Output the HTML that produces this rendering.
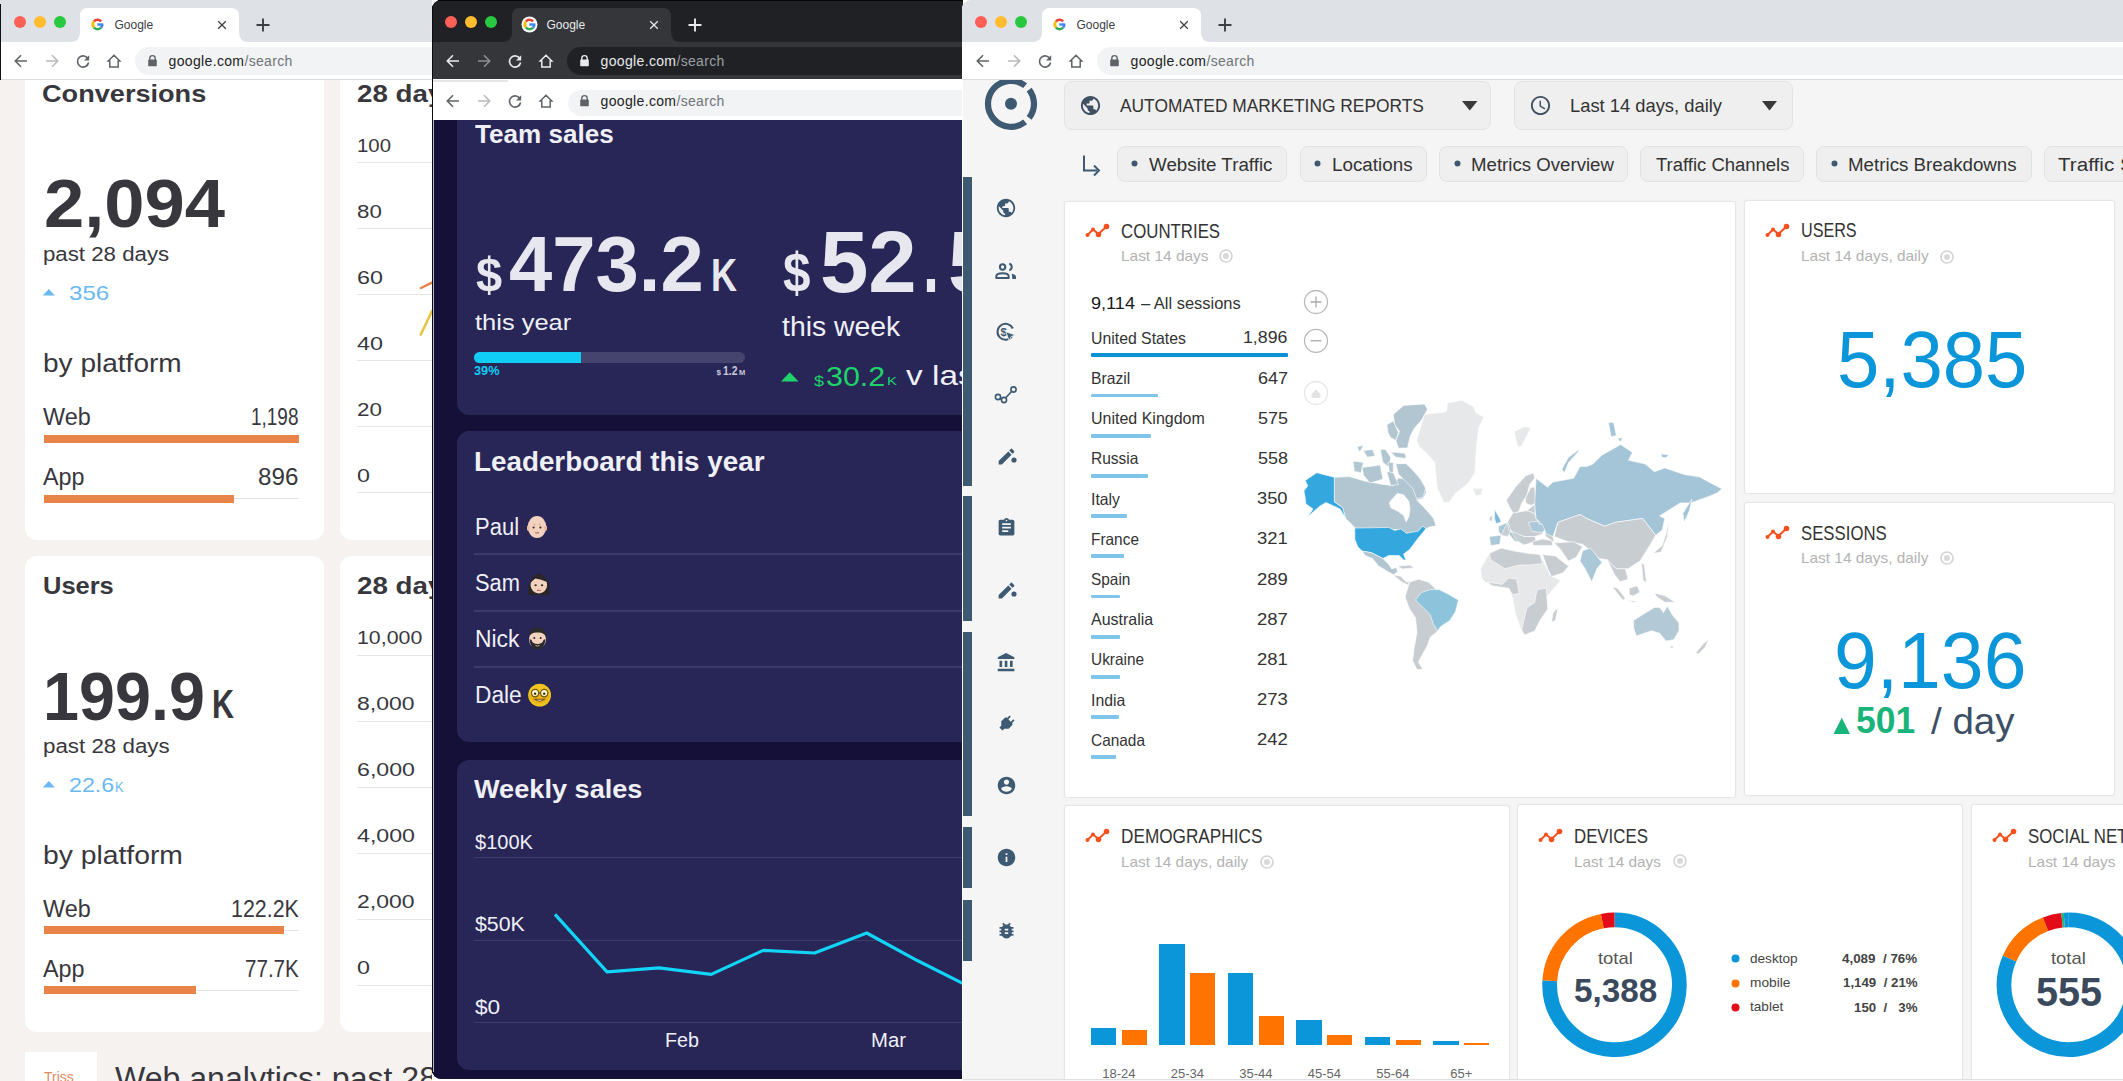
<!DOCTYPE html><html><head><meta charset="utf-8"><style>html,body{margin:0;padding:0;width:2123px;height:1081px;overflow:hidden;background:#fff;font-family:"Liberation Sans",sans-serif;}*{box-sizing:border-box;-webkit-font-smoothing:antialiased;}</style></head><body><div style="position:relative;width:2123px;height:1081px;overflow:hidden;"><div style="position:absolute;left:0;top:0;width:432px;height:1081px;overflow:hidden;background:#f5f2ef;"><div style="position:absolute;left:25.00px;top:40.00px;width:299.00px;height:500.00px;background:#fff;border-radius:12px;"></div><div style="position:absolute;left:340.00px;top:40.00px;width:200.00px;height:500.00px;background:#fff;border-radius:12px;"></div><div style="position:absolute;left:25.00px;top:556.00px;width:299.00px;height:476.00px;background:#fff;border-radius:12px;"></div><div style="position:absolute;left:340.00px;top:556.00px;width:200.00px;height:476.00px;background:#fff;border-radius:12px;"></div><div style="position:absolute;left:0.00px;top:0.00px;width:432.00px;height:42.00px;background:#dee1e6;"></div><div style="position:absolute;left:14.00px;top:15.50px;width:12.00px;height:12.00px;background:#fe5f57;border-radius:50%;"></div><div style="position:absolute;left:34.00px;top:15.50px;width:12.00px;height:12.00px;background:#febc2e;border-radius:50%;"></div><div style="position:absolute;left:54.00px;top:15.50px;width:12.00px;height:12.00px;background:#28c840;border-radius:50%;"></div><svg style="position:absolute;left:70px;top:8px;" width="180" height="34" viewBox="0 0 180 34"><path d="M0 34 Q10 34 10 24 L10 8 Q10 0 18 0 L161 0 Q169 0 169 8 L169 24 Q169 34 179 34 Z" fill="#ffffff"/></svg><svg style="position:absolute;left:89px;top:16px;" width="17" height="17" viewBox="0 0 17 17"><path d="M4.90 5.48 A4.7 4.7 0 0 1 12.10 5.48" stroke="#ea4335" stroke-width="2.6" fill="none"/><path d="M4.90 11.52 A4.7 4.7 0 0 1 4.90 5.48" stroke="#fbbc05" stroke-width="2.6" fill="none"/><path d="M12.10 11.52 A4.7 4.7 0 0 1 4.90 11.52" stroke="#34a853" stroke-width="2.6" fill="none"/><path d="M13.20 8.50 A4.7 4.7 0 0 1 12.10 11.52" stroke="#4285f4" stroke-width="2.6" fill="none"/><rect x="8.30" y="7.30" width="6.00" height="2.4" fill="#4285f4"/></svg><div style="position:absolute;top:18.84px;font-size:12px;line-height:12px;color:#3c4043;font-weight:400;white-space:nowrap;left:114.50px;">Google</div><svg style="position:absolute;left:216px;top:19px;" width="12" height="12" viewBox="0 0 12 12"><path d="M2.2 2.2 L9.8 9.8 M9.8 2.2 L2.2 9.8" stroke="#3c4043" stroke-width="1.3"/></svg><svg style="position:absolute;left:255px;top:17px;" width="16" height="16" viewBox="0 0 16 16"><path d="M8 1.5 V14.5 M1.5 8 H14.5" stroke="#3c4043" stroke-width="1.9"/></svg><div style="position:absolute;left:0.00px;top:42.00px;width:432.00px;height:37.00px;background:#ffffff;"></div><div style="position:absolute;left:0.00px;top:79.00px;width:432.00px;height:1.00px;background:#dadce0;"></div><svg style="position:absolute;left:13px;top:53px;" width="16" height="16" viewBox="0 0 16 16"><path d="M14 8 H2.5 M8 2.3 L2.3 8 L8 13.7" stroke="#5f6368" stroke-width="1.6" fill="none"/></svg><svg style="position:absolute;left:44px;top:53px;" width="16" height="16" viewBox="0 0 16 16"><path d="M2 8 H13.5 M8 2.3 L13.7 8 L8 13.7" stroke="#b9babc" stroke-width="1.6" fill="none"/></svg><svg style="position:absolute;left:75px;top:53px;" width="16" height="16" viewBox="0 0 16 16"><path d="M13.2 6.2 A5.6 5.6 0 1 0 13.6 9.5" stroke="#5f6368" stroke-width="1.6" fill="none"/><path d="M14.2 2.2 V7.4 H9" fill="#5f6368"/></svg><svg style="position:absolute;left:106px;top:53px;" width="16" height="16" viewBox="0 0 16 16"><path d="M8 2.2 L2.2 8 H3.8 V14 H12.2 V8 H13.8 Z" stroke="#5f6368" stroke-width="1.5" fill="none" stroke-linejoin="miter"/></svg><div style="position:absolute;left:135.00px;top:47.00px;width:317.00px;height:27.50px;background:#f1f3f4;border-radius:14px;"></div><svg style="position:absolute;left:147px;top:54px;" width="11" height="13" viewBox="0 0 11 13"><path d="M2.8 6 V4.3 A2.7 2.7 0 0 1 8.2 4.3 V6" stroke="#5f6368" stroke-width="1.4" fill="none"/><rect x="1.2" y="5.6" width="8.6" height="6.6" rx="0.8" fill="#5f6368"/></svg><div style="position:absolute;top:54.05px;font-size:14px;line-height:14px;color:#202124;font-weight:400;white-space:nowrap;letter-spacing:0.35px;left:168.50px;">google.com<span style="color:#6f7378">/search</span></div><div style="position:absolute;left:41.70px;top:81.83px;font-size:24.3px;line-height:24.3px;color:#38373d;font-weight:700;white-space:pre;transform-origin:0 20.57px;transform:scaleX(1.1162);">Conversions</div><div style="position:absolute;left:44.40px;top:168.84px;font-size:68px;line-height:68px;color:#38373d;font-weight:700;white-space:pre;transform-origin:0 57.56px;transform:scaleX(1.0640);">2,094</div><div style="position:absolute;left:42.70px;top:245.49px;font-size:19.5px;line-height:19.5px;color:#38373d;font-weight:400;white-space:pre;transform-origin:0 16.51px;transform:scaleX(1.1410);">past 28 days</div><svg style="position:absolute;left:42px;top:288px;" width="14" height="8" viewBox="0 0 14 8"><path d="M0.7 7.6 L6.8 0.9 L12.9 7.6 Z" fill="#6bb9f0"/></svg><div style="position:absolute;left:68.90px;top:282.22px;font-size:21px;line-height:21px;color:#6bb9f0;font-weight:400;white-space:pre;transform-origin:0 17.78px;transform:scaleX(1.1457);">356</div><div style="position:absolute;left:43.30px;top:350.39px;font-size:26px;line-height:26px;color:#38373d;font-weight:400;white-space:pre;transform-origin:0 22.01px;transform:scaleX(1.0785);">by platform</div><div style="position:absolute;left:43.30px;top:406.23px;font-size:23px;line-height:23px;color:#38373d;font-weight:400;white-space:pre;transform-origin:0 19.47px;transform:scaleX(1.0171);">Web</div><div style="position:absolute;left:250.50px;top:406.23px;font-size:23px;line-height:23px;color:#38373d;font-weight:400;white-space:pre;transform-origin:0 19.47px;transform:scaleX(0.8247);">1,198</div><div style="position:absolute;left:44.00px;top:434.60px;width:255.00px;height:8.00px;background:#e8834a;"></div><div style="position:absolute;left:43.30px;top:465.53px;font-size:23px;line-height:23px;color:#38373d;font-weight:400;white-space:pre;transform-origin:0 19.47px;transform:scaleX(1.0147);">App</div><div style="position:absolute;left:257.60px;top:465.53px;font-size:23px;line-height:23px;color:#38373d;font-weight:400;white-space:pre;transform-origin:0 19.47px;transform:scaleX(1.0521);">896</div><div style="position:absolute;left:44.00px;top:498.00px;width:255.00px;height:1.00px;background:#e3e3e3;"></div><div style="position:absolute;left:44.00px;top:494.60px;width:190.00px;height:8.00px;background:#e8834a;"></div><div style="position:absolute;left:356.70px;top:81.83px;font-size:24.3px;line-height:24.3px;color:#38373d;font-weight:700;white-space:pre;transform-origin:0 20.57px;transform:scaleX(1.1420);">28 days</div><div style="position:absolute;left:357.00px;top:136.74px;font-size:18.5px;line-height:18.5px;color:#38373d;font-weight:400;white-space:pre;transform-origin:0 15.66px;transform:scaleX(1.1003);">100</div><div style="position:absolute;left:357.00px;top:162.40px;width:80.00px;height:1.00px;background:#e6e6e6;"></div><div style="position:absolute;left:357.00px;top:202.74px;font-size:18.5px;line-height:18.5px;color:#38373d;font-weight:400;white-space:pre;transform-origin:0 15.66px;transform:scaleX(1.2039);">80</div><div style="position:absolute;left:357.00px;top:228.40px;width:80.00px;height:1.00px;background:#e6e6e6;"></div><div style="position:absolute;left:357.00px;top:268.74px;font-size:18.5px;line-height:18.5px;color:#38373d;font-weight:400;white-space:pre;transform-origin:0 15.66px;transform:scaleX(1.2621);">60</div><div style="position:absolute;left:357.00px;top:294.40px;width:80.00px;height:1.00px;background:#e6e6e6;"></div><div style="position:absolute;left:357.00px;top:334.74px;font-size:18.5px;line-height:18.5px;color:#38373d;font-weight:400;white-space:pre;transform-origin:0 15.66px;transform:scaleX(1.2621);">40</div><div style="position:absolute;left:357.00px;top:360.40px;width:80.00px;height:1.00px;background:#e6e6e6;"></div><div style="position:absolute;left:357.00px;top:400.74px;font-size:18.5px;line-height:18.5px;color:#38373d;font-weight:400;white-space:pre;transform-origin:0 15.66px;transform:scaleX(1.2136);">20</div><div style="position:absolute;left:357.00px;top:426.40px;width:80.00px;height:1.00px;background:#e6e6e6;"></div><div style="position:absolute;left:357.00px;top:466.74px;font-size:18.5px;line-height:18.5px;color:#38373d;font-weight:400;white-space:pre;transform-origin:0 15.66px;transform:scaleX(1.2621);">0</div><div style="position:absolute;left:357.00px;top:492.40px;width:80.00px;height:1.00px;background:#e6e6e6;"></div><svg style="position:absolute;left:416px;top:276px;" width="20" height="64" viewBox="0 0 20 64"><path d="M5 12 L16 6.5" stroke="#e8834a" stroke-width="2.5" stroke-linecap="round"/><path d="M4.8 58.5 L16 35" stroke="#e8c341" stroke-width="2.5" stroke-linecap="round"/></svg><div style="position:absolute;left:42.50px;top:574.43px;font-size:24.3px;line-height:24.3px;color:#38373d;font-weight:700;white-space:pre;transform-origin:0 20.57px;transform:scaleX(1.0474);">Users</div><div style="position:absolute;left:42.50px;top:661.64px;font-size:68px;line-height:68px;color:#38373d;font-weight:700;white-space:pre;transform-origin:0 57.56px;transform:scaleX(0.9512);">199.9</div><div style="position:absolute;left:212.30px;top:684.49px;font-size:41px;line-height:41px;color:#38373d;font-weight:700;white-space:pre;transform-origin:0 34.71px;transform:scaleX(0.7432);">K</div><div style="position:absolute;left:42.50px;top:737.49px;font-size:19.5px;line-height:19.5px;color:#38373d;font-weight:400;white-space:pre;transform-origin:0 16.51px;transform:scaleX(1.1456);">past 28 days</div><svg style="position:absolute;left:42px;top:780px;" width="14" height="8" viewBox="0 0 14 8"><path d="M0.7 7.6 L6.8 0.9 L12.9 7.6 Z" fill="#6bb9f0"/></svg><div style="position:absolute;left:68.50px;top:774.42px;font-size:21px;line-height:21px;color:#6bb9f0;font-weight:400;white-space:pre;transform-origin:0 17.78px;transform:scaleX(1.1076);">22.6</div><div style="position:absolute;left:114.80px;top:780.35px;font-size:14px;line-height:14px;color:#6bb9f0;font-weight:400;white-space:pre;transform-origin:0 11.85px;transform:scaleX(0.9140);">K</div><div style="position:absolute;left:42.50px;top:841.99px;font-size:26px;line-height:26px;color:#38373d;font-weight:400;white-space:pre;transform-origin:0 22.01px;transform:scaleX(1.0879);">by platform</div><div style="position:absolute;left:43.30px;top:897.53px;font-size:23px;line-height:23px;color:#38373d;font-weight:400;white-space:pre;transform-origin:0 19.47px;transform:scaleX(1.0171);">Web</div><div style="position:absolute;left:230.50px;top:897.53px;font-size:23px;line-height:23px;color:#38373d;font-weight:400;white-space:pre;transform-origin:0 19.47px;transform:scaleX(0.9314);">122.2K</div><div style="position:absolute;left:44.00px;top:930.00px;width:255.00px;height:1.00px;background:#e3e3e3;"></div><div style="position:absolute;left:44.00px;top:926.30px;width:240.00px;height:8.00px;background:#e8834a;"></div><div style="position:absolute;left:43.30px;top:958.23px;font-size:23px;line-height:23px;color:#38373d;font-weight:400;white-space:pre;transform-origin:0 19.47px;transform:scaleX(1.0147);">App</div><div style="position:absolute;left:244.60px;top:958.23px;font-size:23px;line-height:23px;color:#38373d;font-weight:400;white-space:pre;transform-origin:0 19.47px;transform:scaleX(0.8952);">77.7K</div><div style="position:absolute;left:44.00px;top:990.00px;width:255.00px;height:1.00px;background:#e3e3e3;"></div><div style="position:absolute;left:44.00px;top:986.40px;width:152.00px;height:8.00px;background:#e8834a;"></div><div style="position:absolute;left:356.70px;top:574.43px;font-size:24.3px;line-height:24.3px;color:#38373d;font-weight:700;white-space:pre;transform-origin:0 20.57px;transform:scaleX(1.1420);">28 days</div><div style="position:absolute;left:357.00px;top:629.04px;font-size:18.5px;line-height:18.5px;color:#38373d;font-weight:400;white-space:pre;transform-origin:0 15.66px;transform:scaleX(1.1537);">10,000</div><div style="position:absolute;left:357.00px;top:654.70px;width:80.00px;height:1.00px;background:#e6e6e6;"></div><div style="position:absolute;left:357.00px;top:695.04px;font-size:18.5px;line-height:18.5px;color:#38373d;font-weight:400;white-space:pre;transform-origin:0 15.66px;transform:scaleX(1.2419);">8,000</div><div style="position:absolute;left:357.00px;top:720.70px;width:80.00px;height:1.00px;background:#e6e6e6;"></div><div style="position:absolute;left:357.00px;top:761.04px;font-size:18.5px;line-height:18.5px;color:#38373d;font-weight:400;white-space:pre;transform-origin:0 15.66px;transform:scaleX(1.2527);">6,000</div><div style="position:absolute;left:357.00px;top:786.70px;width:80.00px;height:1.00px;background:#e6e6e6;"></div><div style="position:absolute;left:357.00px;top:827.04px;font-size:18.5px;line-height:18.5px;color:#38373d;font-weight:400;white-space:pre;transform-origin:0 15.66px;transform:scaleX(1.2527);">4,000</div><div style="position:absolute;left:357.00px;top:852.70px;width:80.00px;height:1.00px;background:#e6e6e6;"></div><div style="position:absolute;left:357.00px;top:893.04px;font-size:18.5px;line-height:18.5px;color:#38373d;font-weight:400;white-space:pre;transform-origin:0 15.66px;transform:scaleX(1.2419);">2,000</div><div style="position:absolute;left:357.00px;top:918.70px;width:80.00px;height:1.00px;background:#e6e6e6;"></div><div style="position:absolute;left:357.00px;top:959.04px;font-size:18.5px;line-height:18.5px;color:#38373d;font-weight:400;white-space:pre;transform-origin:0 15.66px;transform:scaleX(1.2621);">0</div><div style="position:absolute;left:357.00px;top:984.70px;width:80.00px;height:1.00px;background:#e6e6e6;"></div><div style="position:absolute;left:25.00px;top:1052.00px;width:72.00px;height:40.00px;background:#fff;"></div><div style="position:absolute;top:1070.15px;font-size:14px;line-height:14px;color:#e08a60;font-weight:400;white-space:nowrap;left:44.00px;font-family:"Liberation Serif",serif;">Triss</div><div style="position:absolute;left:115.00px;top:1062.76px;font-size:31px;line-height:31px;color:#38373d;font-weight:400;white-space:pre;transform-origin:0 26.24px;transform:scaleX(1.0344);">Web analytics: past 28</div></div><div style="position:absolute;left:0.00px;top:4.00px;width:1.00px;height:76.00px;background:#111;"></div><div style="position:absolute;left:432px;top:0;width:531px;height:1079px;overflow:hidden;background:#141037;border-radius:9px 0 0 9px;"><div style="position:absolute;left:0.00px;top:0.00px;width:531.00px;height:42.00px;background:#202124;"></div><div style="position:absolute;left:13.00px;top:15.50px;width:12.00px;height:12.00px;background:#fe5f57;border-radius:50%;"></div><div style="position:absolute;left:33.00px;top:15.50px;width:12.00px;height:12.00px;background:#febc2e;border-radius:50%;"></div><div style="position:absolute;left:53.00px;top:15.50px;width:12.00px;height:12.00px;background:#28c840;border-radius:50%;"></div><svg style="position:absolute;left:70px;top:8px;" width="180" height="34" viewBox="0 0 180 34"><path d="M0 34 Q10 34 10 24 L10 8 Q10 0 18 0 L161 0 Q169 0 169 8 L169 24 Q169 34 179 34 Z" fill="#35363a"/></svg><svg style="position:absolute;left:89px;top:16px;" width="17" height="17" viewBox="0 0 17 17"><circle cx="8.5" cy="8.5" r="8" fill="#fff"/><path d="M4.90 5.48 A4.7 4.7 0 0 1 12.10 5.48" stroke="#ea4335" stroke-width="2.6" fill="none"/><path d="M4.90 11.52 A4.7 4.7 0 0 1 4.90 5.48" stroke="#fbbc05" stroke-width="2.6" fill="none"/><path d="M12.10 11.52 A4.7 4.7 0 0 1 4.90 11.52" stroke="#34a853" stroke-width="2.6" fill="none"/><path d="M13.20 8.50 A4.7 4.7 0 0 1 12.10 11.52" stroke="#4285f4" stroke-width="2.6" fill="none"/><rect x="8.30" y="7.30" width="6.00" height="2.4" fill="#4285f4"/></svg><div style="position:absolute;top:18.84px;font-size:12px;line-height:12px;color:#e8eaed;font-weight:400;white-space:nowrap;left:114.50px;">Google</div><svg style="position:absolute;left:216px;top:19px;" width="12" height="12" viewBox="0 0 12 12"><path d="M2.2 2.2 L9.8 9.8 M9.8 2.2 L2.2 9.8" stroke="#e8eaed" stroke-width="1.3"/></svg><svg style="position:absolute;left:255px;top:17px;" width="16" height="16" viewBox="0 0 16 16"><path d="M8 1.5 V14.5 M1.5 8 H14.5" stroke="#e8eaed" stroke-width="1.9"/></svg><div style="position:absolute;left:0.00px;top:42.00px;width:531.00px;height:37.00px;background:#35363a;"></div><div style="position:absolute;left:0.00px;top:79.00px;width:531.00px;height:1.00px;background:#3a3b3e;"></div><svg style="position:absolute;left:13px;top:53px;" width="16" height="16" viewBox="0 0 16 16"><path d="M14 8 H2.5 M8 2.3 L2.3 8 L8 13.7" stroke="#e8eaed" stroke-width="1.6" fill="none"/></svg><svg style="position:absolute;left:44px;top:53px;" width="16" height="16" viewBox="0 0 16 16"><path d="M2 8 H13.5 M8 2.3 L13.7 8 L8 13.7" stroke="#8d8e91" stroke-width="1.6" fill="none"/></svg><svg style="position:absolute;left:75px;top:53px;" width="16" height="16" viewBox="0 0 16 16"><path d="M13.2 6.2 A5.6 5.6 0 1 0 13.6 9.5" stroke="#e8eaed" stroke-width="1.6" fill="none"/><path d="M14.2 2.2 V7.4 H9" fill="#e8eaed"/></svg><svg style="position:absolute;left:106px;top:53px;" width="16" height="16" viewBox="0 0 16 16"><path d="M8 2.2 L2.2 8 H3.8 V14 H12.2 V8 H13.8 Z" stroke="#e8eaed" stroke-width="1.5" fill="none" stroke-linejoin="miter"/></svg><div style="position:absolute;left:135.00px;top:47.00px;width:416.00px;height:27.50px;background:#202124;border-radius:14px;"></div><svg style="position:absolute;left:147px;top:54px;" width="11" height="13" viewBox="0 0 11 13"><path d="M2.8 6 V4.3 A2.7 2.7 0 0 1 8.2 4.3 V6" stroke="#e8eaed" stroke-width="1.4" fill="none"/><rect x="1.2" y="5.6" width="8.6" height="6.6" rx="0.8" fill="#e8eaed"/></svg><div style="position:absolute;top:54.05px;font-size:14px;line-height:14px;color:#e8eaed;font-weight:400;white-space:nowrap;letter-spacing:0.35px;left:168.50px;">google.com<span style="color:#9aa0a6">/search</span></div><div style="position:absolute;left:0.00px;top:79.00px;width:531.00px;height:41.00px;background:#ffffff;"></div><div style="position:absolute;left:0.00px;top:80.00px;width:76.00px;height:1.50px;background:#e6e6e6;"></div><svg style="position:absolute;left:13px;top:93px;" width="16" height="16" viewBox="0 0 16 16"><path d="M14 8 H2.5 M8 2.3 L2.3 8 L8 13.7" stroke="#5f6368" stroke-width="1.6" fill="none"/></svg><svg style="position:absolute;left:44px;top:93px;" width="16" height="16" viewBox="0 0 16 16"><path d="M2 8 H13.5 M8 2.3 L13.7 8 L8 13.7" stroke="#b9babc" stroke-width="1.6" fill="none"/></svg><svg style="position:absolute;left:75px;top:93px;" width="16" height="16" viewBox="0 0 16 16"><path d="M13.2 6.2 A5.6 5.6 0 1 0 13.6 9.5" stroke="#5f6368" stroke-width="1.6" fill="none"/><path d="M14.2 2.2 V7.4 H9" fill="#5f6368"/></svg><svg style="position:absolute;left:106px;top:93px;" width="16" height="16" viewBox="0 0 16 16"><path d="M8 2.2 L2.2 8 H3.8 V14 H12.2 V8 H13.8 Z" stroke="#5f6368" stroke-width="1.5" fill="none"/></svg><div style="position:absolute;left:135.50px;top:90.00px;width:531.00px;height:26.00px;background:#f1f3f4;border-radius:13px;"></div><svg style="position:absolute;left:147px;top:94px;" width="11" height="13" viewBox="0 0 11 13"><path d="M2.8 6 V4.3 A2.7 2.7 0 0 1 8.2 4.3 V6" stroke="#5f6368" stroke-width="1.4" fill="none"/><rect x="1.2" y="5.6" width="8.6" height="6.6" rx="0.8" fill="#5f6368"/></svg><div style="position:absolute;top:93.65px;font-size:14px;line-height:14px;color:#202124;font-weight:400;white-space:nowrap;letter-spacing:0.35px;left:168.50px;">google.com<span style="color:#6f7378">/search</span></div><div style="position:absolute;left:0;top:120px;width:531px;height:959px;overflow:hidden;background:#141037;"><div style="position:absolute;left:-432px;top:-120px;width:2123px;height:1081px;"><div style="position:absolute;left:457.00px;top:60.00px;width:600.00px;height:355.00px;background:#272656;border-radius:12px;"></div><div style="position:absolute;left:475.30px;top:120.70px;font-size:26.7px;line-height:26.7px;color:#efeff6;font-weight:700;white-space:pre;transform-origin:0 22.60px;transform:scaleX(0.9768);">Team sales</div><div style="position:absolute;left:475.80px;top:249.92px;font-size:49px;line-height:49px;color:#e7e7ef;font-weight:700;white-space:pre;transform-origin:0 41.48px;transform:scaleX(0.9597);">$</div><div style="position:absolute;left:508.90px;top:225.80px;font-size:77.5px;line-height:77.5px;color:#e7e7ef;font-weight:700;white-space:pre;transform-origin:0 65.60px;transform:scaleX(1.0041);">473.2</div><div style="position:absolute;left:711.20px;top:252.46px;font-size:46px;line-height:46px;color:#e7e7ef;font-weight:700;white-space:pre;transform-origin:0 38.94px;transform:scaleX(0.7831);">K</div><div style="position:absolute;left:475.30px;top:311.68px;font-size:22px;line-height:22px;color:#efeff6;font-weight:400;white-space:pre;transform-origin:0 18.62px;transform:scaleX(1.1576);">this year</div><div style="position:absolute;left:474.30px;top:351.70px;width:270.50px;height:11.50px;background:#45446f;border-radius:6px;"></div><div style="position:absolute;left:474.30px;top:351.70px;width:106.40px;height:11.50px;background:#10cdf6;border-radius:6px 0 0 6px;"></div><div style="position:absolute;left:474.30px;top:364.73px;font-size:12.6px;line-height:12.6px;color:#10cdf6;font-weight:700;white-space:pre;transform-origin:0 10.67px;transform:scaleX(1.0119);">39%</div><div style="position:absolute;left:716.60px;top:368.63px;font-size:8px;line-height:8px;color:#c9c9d8;font-weight:700;white-space:pre;transform-origin:0 6.77px;transform:scaleX(1.0000);">$</div><div style="position:absolute;left:722.50px;top:365.24px;font-size:12px;line-height:12px;color:#c9c9d8;font-weight:700;white-space:pre;transform-origin:0 10.16px;transform:scaleX(0.8683);">1.2</div><div style="position:absolute;left:738.50px;top:368.63px;font-size:8px;line-height:8px;color:#c9c9d8;font-weight:700;white-space:pre;transform-origin:0 6.77px;transform:scaleX(0.9403);">M</div><div style="position:absolute;left:782.50px;top:246.44px;font-size:55px;line-height:55px;color:#e7e7ef;font-weight:700;white-space:pre;transform-origin:0 46.56px;transform:scaleX(0.8987);">$</div><div style="position:absolute;left:820.00px;top:218.93px;font-size:87.5px;line-height:87.5px;color:#e7e7ef;font-weight:700;white-space:pre;transform-origin:0 74.07px;transform:scaleX(0.9938);">52</div><div style="position:absolute;left:923.00px;top:218.93px;font-size:87.5px;line-height:87.5px;color:#e7e7ef;font-weight:700;white-space:pre;transform-origin:0 74.07px;transform:scaleX(0.6584);">.</div><div style="position:absolute;left:947.50px;top:218.93px;font-size:87.5px;line-height:87.5px;color:#e7e7ef;font-weight:700;white-space:pre;transform-origin:0 74.07px;transform:scaleX(0.9856);">5</div><div style="position:absolute;left:781.70px;top:313.42px;font-size:27.5px;line-height:27.5px;color:#efeff6;font-weight:400;white-space:pre;transform-origin:0 23.28px;transform:scaleX(1.0314);">this week</div><svg style="position:absolute;left:780.8px;top:371.7px;" width="18" height="10" viewBox="0 0 18 10"><path d="M0 9.5 L8.75 0.3 L17.5 9.5 Z" fill="#1fd36a"/></svg><div style="position:absolute;left:813.70px;top:373.95px;font-size:14px;line-height:14px;color:#1fd36a;font-weight:400;white-space:pre;transform-origin:0 11.85px;transform:scaleX(1.2821);">$</div><div style="position:absolute;left:825.80px;top:362.52px;font-size:27.5px;line-height:27.5px;color:#1fd36a;font-weight:400;white-space:pre;transform-origin:0 23.28px;transform:scaleX(1.1065);">30.2</div><div style="position:absolute;left:886.70px;top:376.07px;font-size:11.5px;line-height:11.5px;color:#1fd36a;font-weight:400;white-space:pre;transform-origin:0 9.73px;transform:scaleX(1.2987);">K</div><div style="position:absolute;left:905.80px;top:362.10px;font-size:28px;line-height:28px;color:#efeff6;font-weight:400;white-space:pre;transform-origin:0 23.70px;transform:scaleX(1.1927);">v last</div><div style="position:absolute;left:457.00px;top:431.00px;width:600.00px;height:311.00px;background:#272656;border-radius:12px;"></div><div style="position:absolute;left:474.20px;top:448.74px;font-size:27px;line-height:27px;color:#efeff6;font-weight:700;white-space:pre;transform-origin:0 22.86px;transform:scaleX(1.0298);">Leaderboard this year</div><div style="position:absolute;left:475.00px;top:516.43px;font-size:23px;line-height:23px;color:#efeff6;font-weight:400;white-space:pre;transform-origin:0 19.47px;transform:scaleX(0.9565);">Paul</div><svg style="position:absolute;left:526.80px;top:515.00px" width="20" height="24" viewBox="0 0 20 24" preserveAspectRatio="none"><ellipse cx="10" cy="12" rx="9.3" ry="11" fill="#f3d2bf"/><ellipse cx="1.2" cy="13" rx="1.6" ry="2.6" fill="#e9b89f"/><ellipse cx="18.8" cy="13" rx="1.6" ry="2.6" fill="#e9b89f"/><circle cx="6.6" cy="12.5" r="1.1" fill="#3b2a22"/><circle cx="13.4" cy="12.5" r="1.1" fill="#3b2a22"/><path d="M6.5 9.6 H8.5 M11.5 9.6 H13.5" stroke="#c99a82" stroke-width="0.9"/><path d="M8.2 17.5 Q10 18.6 11.8 17.5" stroke="#b06a5a" stroke-width="1.1" fill="none"/></svg><div style="position:absolute;left:475.00px;top:572.13px;font-size:23px;line-height:23px;color:#efeff6;font-weight:400;white-space:pre;transform-origin:0 19.47px;transform:scaleX(0.9514);">Sam</div><svg style="position:absolute;left:527.00px;top:570.80px" width="23.7" height="24" viewBox="0 0 20 24" preserveAspectRatio="none"><path d="M1 24 Q-0.5 8 10 2 Q20.5 8 19 24 Z" fill="#2a2628"/><ellipse cx="10" cy="14" rx="7" ry="8.5" fill="#f3d2bf"/><path d="M3 12 Q4 4 10 3.5 Q15.5 4 17 11 Q12 8 7 7.5 Q5 9 3 12 Z" fill="#2a2628"/><circle cx="7.3" cy="14.2" r="1" fill="#3b2a22"/><circle cx="12.7" cy="14.2" r="1" fill="#3b2a22"/><path d="M8.5 19 Q10 20 11.5 19" stroke="#c2665a" stroke-width="1.2" fill="none"/></svg><div style="position:absolute;left:475.00px;top:628.33px;font-size:23px;line-height:23px;color:#efeff6;font-weight:400;white-space:pre;transform-origin:0 19.47px;transform:scaleX(0.9955);">Nick</div><svg style="position:absolute;left:527.00px;top:626.00px" width="21" height="24" viewBox="0 0 21 24" preserveAspectRatio="none"><ellipse cx="10.5" cy="13" rx="8.5" ry="10" fill="#f3d2bf"/><path d="M2 11 Q1.5 2 10.5 1.5 Q19.5 2 19 11 Q17 6 10.5 6.5 Q4 6 2 11 Z" fill="#2b2a2b"/><path d="M2.6 13 Q3 23 10.5 23.5 Q18 23 18.4 13 L16.5 14 Q15.5 18 10.5 18 Q5.5 18 4.5 14 Z" fill="#2b2a2b"/><circle cx="7.3" cy="12" r="1" fill="#2b2a2b"/><circle cx="13.7" cy="12" r="1" fill="#2b2a2b"/><path d="M8.5 19.5 Q10.5 20.5 12.5 19.5" stroke="#d9a58d" stroke-width="1" fill="none"/></svg><div style="position:absolute;left:475.00px;top:683.53px;font-size:23px;line-height:23px;color:#efeff6;font-weight:400;white-space:pre;transform-origin:0 19.47px;transform:scaleX(0.9873);">Dale</div><svg style="position:absolute;left:527.90px;top:682.50px" width="23.3" height="24.3" viewBox="0 0 23 24" preserveAspectRatio="none"><circle cx="11.5" cy="12" r="11.3" fill="#f2c41f"/><path d="M0.5 12 A11.3 11.3 0 0 0 22.5 12" fill="#e0a80e" opacity="0.5"/><circle cx="7" cy="10" r="3.6" fill="#fff6d0" stroke="#6b5a10" stroke-width="1.2"/><circle cx="16" cy="10" r="3.6" fill="#fff6d0" stroke="#6b5a10" stroke-width="1.2"/><path d="M10.6 10 H12.4" stroke="#6b5a10" stroke-width="1.2"/><circle cx="7" cy="10.5" r="1.2" fill="#3a2a10"/><circle cx="16" cy="10.5" r="1.2" fill="#3a2a10"/><path d="M6.5 16 Q11.5 20 16.5 16 Z" fill="#fff" stroke="#7a4a10" stroke-width="1"/></svg><div style="position:absolute;left:474.00px;top:553.30px;width:600.00px;height:1.50px;background:#3b3a6c;"></div><div style="position:absolute;left:474.00px;top:610.30px;width:600.00px;height:1.50px;background:#3b3a6c;"></div><div style="position:absolute;left:474.00px;top:666.00px;width:600.00px;height:1.50px;background:#3b3a6c;"></div><div style="position:absolute;left:457.00px;top:759.60px;width:600.00px;height:310.80px;background:#272656;border-radius:12px;"></div><div style="position:absolute;left:474.30px;top:776.17px;font-size:26.5px;line-height:26.5px;color:#efeff6;font-weight:700;white-space:pre;transform-origin:0 22.43px;transform:scaleX(1.0237);">Weekly sales</div><div style="position:absolute;left:474.90px;top:831.75px;font-size:20.5px;line-height:20.5px;color:#efeff6;font-weight:400;white-space:pre;transform-origin:0 17.35px;transform:scaleX(0.9764);">$100K</div><div style="position:absolute;left:474.00px;top:856.80px;width:600.00px;height:1.20px;background:#3d3c6d;"></div><div style="position:absolute;left:474.90px;top:914.35px;font-size:20.5px;line-height:20.5px;color:#efeff6;font-weight:400;white-space:pre;transform-origin:0 17.35px;transform:scaleX(1.0397);">$50K</div><div style="position:absolute;left:474.00px;top:939.70px;width:600.00px;height:1.20px;background:#3d3c6d;"></div><div style="position:absolute;left:474.90px;top:997.45px;font-size:20.5px;line-height:20.5px;color:#efeff6;font-weight:400;white-space:pre;transform-origin:0 17.35px;transform:scaleX(1.1053);">$0</div><div style="position:absolute;left:474.00px;top:1022.20px;width:600.00px;height:1.20px;background:#3d3c6d;"></div><div style="position:absolute;left:665.00px;top:1030.15px;font-size:20.5px;line-height:20.5px;color:#efeff6;font-weight:400;white-space:pre;transform-origin:0 17.35px;transform:scaleX(0.9632);">Feb</div><div style="position:absolute;left:871.00px;top:1030.15px;font-size:20.5px;line-height:20.5px;color:#efeff6;font-weight:400;white-space:pre;transform-origin:0 17.35px;transform:scaleX(0.9915);">Mar</div><svg style="position:absolute;left:0;top:0" width="2123" height="1081"><polyline points="555.0,914.4 607.0,971.9 659.0,967.8 711.2,974.4 763.2,950.4 814.6,953.0 866.7,933.0 917.8,960.8 970.0,987.0" fill="none" stroke="#12d4f7" stroke-width="3.2" stroke-linejoin="round"/></svg></div></div></div><div style="position:absolute;left:432.00px;top:6.00px;width:1.30px;height:1067.00px;background:#0c0c0c;"></div><div style="position:absolute;left:438.00px;top:0.00px;width:525.00px;height:1.20px;background:#050505;"></div><div style="position:absolute;left:433.40px;top:120.00px;width:1.00px;height:952.00px;background:#b4b3d0;"></div><div style="position:absolute;left:962px;top:0;width:1161px;height:1081px;overflow:hidden;background:#f5f5f5;border-top-left-radius:9px;"><div style="position:absolute;left:-962px;top:0;width:2123px;height:1081px;"><div style="position:absolute;left:963.00px;top:176.70px;width:8.50px;height:309.30px;background:#3e5a72;"></div><div style="position:absolute;left:963.00px;top:496.00px;width:8.50px;height:124.50px;background:#3e5a72;"></div><div style="position:absolute;left:963.00px;top:632.00px;width:8.50px;height:184.00px;background:#3e5a72;"></div><div style="position:absolute;left:963.00px;top:827.00px;width:8.50px;height:61.00px;background:#3e5a72;"></div><div style="position:absolute;left:963.00px;top:900.00px;width:8.50px;height:61.00px;background:#3e5a72;"></div><svg style="position:absolute;left:0;top:0" width="2123" height="200"><path d="M1025.16 121.92 A23 23 0 1 1 1025.16 85.68" stroke="#3e5a72" stroke-width="6.2" fill="none"/><path d="M1029.12 89.64 A23 23 0 0 1 1029.12 117.96" stroke="#3e5a72" stroke-width="6.2" fill="none"/><circle cx="1011" cy="103.8" r="6" fill="#3e5a72"/></svg><svg style="position:absolute;left:995.00px;top:197.00px" width="22" height="22" viewBox="0 0 24 24"><path  d="M12 2C6.48 2 2 6.48 2 12s4.48 10 10 10 10-4.48 10-10S17.52 2 12 2zm-1 17.93c-3.95-.49-7-3.85-7-7.93 0-.62.08-1.21.21-1.79L9 15v1c0 1.1.9 2 2 2v1.93zm6.9-2.54c-.26-.81-1-1.39-1.9-1.39h-1v-3c0-.55-.45-1-1-1H8v-2h2c.55 0 1-.45 1-1V7h2c1.1 0 2-.9 2-2v-.41c2.93 1.19 5 4.06 5 7.41 0 2.08-.8 3.97-2.1 5.39z" fill="#3e5a72"/></svg><svg style="position:absolute;left:995.50px;top:445.50px" width="21" height="21" viewBox="0 0 24 24"><path  d="M3 17.25V21h3.75L17.81 9.94l-3.75-3.75L3 17.25zM20.71 7.04c.39-.39.39-1.02 0-1.41l-2.34-2.34c-.39-.39-1.02-.39-1.41 0l-1.83 1.83 3.75 3.75 1.83-1.83z" fill="#3e5a72"/></svg><svg style="position:absolute;left:995.50px;top:516.50px" width="21" height="21" viewBox="0 0 24 24"><path  d="M19 3h-4.18C14.4 1.84 13.3 1 12 1c-1.3 0-2.4.84-2.82 2H5c-1.1 0-2 .9-2 2v14c0 1.1.9 2 2 2h14c1.1 0 2-.9 2-2V5c0-1.1-.9-2-2-2zm-7 0c.55 0 1 .45 1 1s-.45 1-1 1-1-.45-1-1 .45-1 1-1zm2 14H7v-2h7v2zm3-4H7v-2h10v2zm0-4H7V7h10v2z" fill="#3e5a72"/></svg><svg style="position:absolute;left:995.50px;top:579.50px" width="21" height="21" viewBox="0 0 24 24"><path  d="M3 17.25V21h3.75L17.81 9.94l-3.75-3.75L3 17.25zM20.71 7.04c.39-.39.39-1.02 0-1.41l-2.34-2.34c-.39-.39-1.02-.39-1.41 0l-1.83 1.83 3.75 3.75 1.83-1.83z" fill="#3e5a72"/></svg><svg style="position:absolute;left:995.50px;top:652.00px" width="21" height="21" viewBox="0 0 24 24"><path  d="M4 10v7h3v-7H4zm6 0v7h3v-7h-3zM2 22h19v-3H2v3zm14-12v7h3v-7h-3zm-4.5-9L2 6v2h19V6l-9.5-5z" fill="#3e5a72"/></svg><svg style="position:absolute;left:995.50px;top:712.50px" width="21" height="21" viewBox="0 0 24 24"><path transform="rotate(45 12 12)" d="M16.01 7L16 3h-2v4h-4V3H8v4h-.01C7 6.99 6 7.99 6 8.99v5.49L9.5 18v3h5v-3l3.5-3.51v-5.5c0-1-1-2-1.99-1.99z" fill="#3e5a72"/></svg><svg style="position:absolute;left:995.50px;top:775.00px" width="21" height="21" viewBox="0 0 24 24"><path  d="M12 2C6.48 2 2 6.48 2 12s4.48 10 10 10 10-4.48 10-10S17.52 2 12 2zm0 3c1.66 0 3 1.34 3 3s-1.34 3-3 3-3-1.34-3-3 1.34-3 3-3zm0 14.2c-2.5 0-4.71-1.28-6-3.22.03-1.99 4-3.08 6-3.08 1.99 0 5.97 1.09 6 3.08-1.29 1.94-3.5 3.22-6 3.22z" fill="#3e5a72"/></svg><svg style="position:absolute;left:995.50px;top:847.00px" width="21" height="21" viewBox="0 0 24 24"><path  d="M12 2C6.48 2 2 6.48 2 12s4.48 10 10 10 10-4.48 10-10S17.52 2 12 2zm1 15h-2v-6h2v6zm0-8h-2V7h2v2z" fill="#3e5a72"/></svg><svg style="position:absolute;left:995.50px;top:919.50px" width="21" height="21" viewBox="0 0 24 24"><path  d="M20 8h-2.81c-.45-.78-1.07-1.45-1.82-1.96L17 4.41 15.59 3l-2.17 2.17C12.96 5.06 12.49 5 12 5c-.49 0-.96.06-1.41.17L8.41 3 7 4.41l1.62 1.63C7.88 6.55 7.26 7.22 6.81 8H4v2h2.09c-.05.33-.09.66-.09 1v1H4v2h2v1c0 .34.04.67.09 1H4v2h2.81c1.04 1.79 2.97 3 5.19 3s4.15-1.21 5.19-3H20v-2h-2.09c.05-.33.09-.66.09-1v-1h2v-2h-2v-1c0-.34-.04-.67-.09-1H20V8zm-6 8h-4v-2h4v2zm0-4h-4v-2h4v2z" fill="#3e5a72"/></svg><svg style="position:absolute;left:1011px;top:457px;" width="6" height="6" viewBox="0 0 6 6"><circle cx="3" cy="3" r="2.6" fill="#3e5a72"/></svg><svg style="position:absolute;left:1011px;top:591px;" width="6" height="6" viewBox="0 0 6 6"><circle cx="3" cy="3" r="2.6" fill="#3e5a72"/></svg><svg style="position:absolute;left:0;top:0" width="2123" height="1081"><circle cx="1002.6" cy="267" r="2.7" fill="none" stroke="#3e5a72" stroke-width="2"/><path d="M996.3 278 V276.5 Q996.3 273.3 1002.5 273.3 Q1008.7 273.3 1008.7 276.5 V278 Z" fill="none" stroke="#3e5a72" stroke-width="2" stroke-linejoin="round"/><path d="M1009.3 263.8 A3.4 3.4 0 0 1 1009.3 270.3" fill="none" stroke="#3e5a72" stroke-width="2"/><path d="M1011.8 273.8 Q1016 274.5 1016 277 V279 H1012.3 Z" fill="#3e5a72"/></svg><svg style="position:absolute;left:0;top:0" width="2123" height="1081"><path d="M1012 336.5 A8 8 0 1 1 1012.8 328.5" fill="none" stroke="#3e5a72" stroke-width="2"/><text x="1003.8" y="336.2" font-size="11.5" font-weight="700" text-anchor="middle" fill="#3e5a72" font-family="Liberation Sans">$</text><path d="M1005.8 331.8 L1015.5 335 L1011.2 336.5 L1009.2 340.8 Z" fill="#3e5a72" stroke="#f5f5f5" stroke-width="0.8"/></svg><svg style="position:absolute;left:994px;top:384px;" width="24" height="20" viewBox="0 0 24 20"><path d="M4 14 L9.5 16 L19 6" stroke="#3e5a72" stroke-width="1.6" fill="none"/><circle cx="4" cy="13" r="2.6" fill="#f4f4f4" stroke="#3e5a72" stroke-width="1.6"/><circle cx="10" cy="16" r="2.6" fill="#f4f4f4" stroke="#3e5a72" stroke-width="1.6"/><circle cx="19.5" cy="5.5" r="2.6" fill="#f4f4f4" stroke="#3e5a72" stroke-width="1.6"/></svg><div style="position:absolute;left:1063.50px;top:80.60px;width:427.50px;height:49.20px;background:#efefef;border:1px solid #e3e3e3;border-radius:8px;"></div><svg style="position:absolute;left:1078.50px;top:93.50px" width="23" height="23" viewBox="0 0 24 24"><path  d="M12 2C6.48 2 2 6.48 2 12s4.48 10 10 10 10-4.48 10-10S17.52 2 12 2zm-1 17.93c-3.95-.49-7-3.85-7-7.93 0-.62.08-1.21.21-1.79L9 15v1c0 1.1.9 2 2 2v1.93zm6.9-2.54c-.26-.81-1-1.39-1.9-1.39h-1v-3c0-.55-.45-1-1-1H8v-2h2c.55 0 1-.45 1-1V7h2c1.1 0 2-.9 2-2v-.41c2.93 1.19 5 4.06 5 7.41 0 2.08-.8 3.97-2.1 5.39z" fill="#3e5061"/></svg><div style="position:absolute;left:1119.70px;top:95.92px;font-size:19px;line-height:19px;color:#333;font-weight:400;white-space:pre;transform-origin:0 16.08px;transform:scaleX(0.9140);">AUTOMATED MARKETING REPORTS</div><svg style="position:absolute;left:1461px;top:100px;" width="18" height="12" viewBox="0 0 18 12"><path d="M1 1 L16.5 1 L8.75 10.5 Z" fill="#3a3a3a"/></svg><div style="position:absolute;left:1513.80px;top:80.50px;width:279.60px;height:49.30px;background:#efefef;border:1px solid #e3e3e3;border-radius:8px;"></div><svg style="position:absolute;left:1528.70px;top:94.00px" width="23" height="23" viewBox="0 0 24 24"><path  d="M11.99 2C6.47 2 2 6.48 2 12s4.47 10 9.99 10C17.52 22 22 17.52 22 12S17.52 2 11.99 2zM12 20c-4.42 0-8-3.58-8-8s3.58-8 8-8 8 3.58 8 8-3.58 8-8 8zm.5-13H11v6l5.25 3.15.75-1.23-4.5-2.67z" fill="#3e5061"/></svg><div style="position:absolute;left:1569.50px;top:96.12px;font-size:19px;line-height:19px;color:#333;font-weight:400;white-space:pre;transform-origin:0 16.08px;transform:scaleX(0.9657);">Last 14 days, daily</div><svg style="position:absolute;left:1761px;top:100px;" width="18" height="12" viewBox="0 0 18 12"><path d="M1 1 L16 1 L8.5 10.5 Z" fill="#3a3a3a"/></svg><svg style="position:absolute;left:1080px;top:153px;" width="24" height="24" viewBox="0 0 24 24"><path d="M4 2.5 V17.5 H17" stroke="#3e5a72" stroke-width="2" fill="none"/><path d="M14 12.5 L19 17.5 L14 22.5" stroke="#3e5a72" stroke-width="2" fill="none"/></svg><div style="position:absolute;left:1116.70px;top:146.00px;width:170.80px;height:35.70px;background:#efefef;border:1px solid #e2e2e2;border-radius:8px;"></div><svg style="position:absolute;left:1131.2px;top:160px;" width="7" height="7" viewBox="0 0 7 7"><circle cx="3.5" cy="3.5" r="3" fill="#3e5a72"/></svg><div style="position:absolute;left:1149.00px;top:155.56px;font-size:18px;line-height:18px;color:#333;font-weight:400;white-space:pre;transform-origin:0 15.24px;transform:scaleX(1.0431);">Website Traffic</div><div style="position:absolute;left:1299.80px;top:146.00px;width:127.10px;height:35.70px;background:#efefef;border:1px solid #e2e2e2;border-radius:8px;"></div><svg style="position:absolute;left:1314.3px;top:160px;" width="7" height="7" viewBox="0 0 7 7"><circle cx="3.5" cy="3.5" r="3" fill="#3e5a72"/></svg><div style="position:absolute;left:1331.50px;top:155.56px;font-size:18px;line-height:18px;color:#333;font-weight:400;white-space:pre;transform-origin:0 15.24px;transform:scaleX(1.0454);">Locations</div><div style="position:absolute;left:1439.00px;top:146.00px;width:189.20px;height:35.70px;background:#efefef;border:1px solid #e2e2e2;border-radius:8px;"></div><svg style="position:absolute;left:1453.5px;top:160px;" width="7" height="7" viewBox="0 0 7 7"><circle cx="3.5" cy="3.5" r="3" fill="#3e5a72"/></svg><div style="position:absolute;left:1470.80px;top:155.56px;font-size:18px;line-height:18px;color:#333;font-weight:400;white-space:pre;transform-origin:0 15.24px;transform:scaleX(1.0355);">Metrics Overview</div><div style="position:absolute;left:1640.30px;top:146.00px;width:163.40px;height:35.70px;background:#efefef;border:1px solid #e2e2e2;border-radius:8px;"></div><div style="position:absolute;left:1655.50px;top:155.56px;font-size:18px;line-height:18px;color:#333;font-weight:400;white-space:pre;transform-origin:0 15.24px;transform:scaleX(1.0261);">Traffic Channels</div><div style="position:absolute;left:1816.00px;top:146.00px;width:216.00px;height:35.70px;background:#efefef;border:1px solid #e2e2e2;border-radius:8px;"></div><svg style="position:absolute;left:1830.5px;top:160px;" width="7" height="7" viewBox="0 0 7 7"><circle cx="3.5" cy="3.5" r="3" fill="#3e5a72"/></svg><div style="position:absolute;left:1847.70px;top:155.56px;font-size:18px;line-height:18px;color:#333;font-weight:400;white-space:pre;transform-origin:0 15.24px;transform:scaleX(1.0407);">Metrics Breakdowns</div><div style="position:absolute;left:2043.70px;top:146.00px;width:196.30px;height:35.70px;background:#efefef;border:1px solid #e2e2e2;border-radius:8px;"></div><div style="position:absolute;left:2058.40px;top:155.56px;font-size:18px;line-height:18px;color:#333;font-weight:400;white-space:pre;transform-origin:0 15.24px;transform:scaleX(1.1467);">Traffic Sources</div><div style="position:absolute;left:1064.30px;top:200.80px;width:671.90px;height:597.60px;background:#fff;border:1px solid #e6e6e6;border-radius:3px;box-shadow:0 0 2px rgba(0,0,0,0.06);"></div><div style="position:absolute;left:1743.50px;top:200.00px;width:371.20px;height:294.00px;background:#fff;border:1px solid #e6e6e6;border-radius:3px;box-shadow:0 0 2px rgba(0,0,0,0.06);"></div><div style="position:absolute;left:1743.50px;top:501.80px;width:371.20px;height:294.50px;background:#fff;border:1px solid #e6e6e6;border-radius:3px;box-shadow:0 0 2px rgba(0,0,0,0.06);"></div><div style="position:absolute;left:1064.00px;top:804.70px;width:445.60px;height:300.00px;background:#fff;border:1px solid #e6e6e6;border-radius:3px;box-shadow:0 0 2px rgba(0,0,0,0.06);"></div><div style="position:absolute;left:1517.20px;top:804.30px;width:446.20px;height:300.00px;background:#fff;border:1px solid #e6e6e6;border-radius:3px;box-shadow:0 0 2px rgba(0,0,0,0.06);"></div><div style="position:absolute;left:1970.60px;top:804.30px;width:446.20px;height:300.00px;background:#fff;border:1px solid #e6e6e6;border-radius:3px;box-shadow:0 0 2px rgba(0,0,0,0.06);"></div><svg style="position:absolute;left:1084.5px;top:222.5px;" width="26" height="16" viewBox="0 0 26 16"><path d="M2.5 12 L8 6.5 L13.5 11 L21.5 3.5" stroke="#f4511e" stroke-width="2" fill="none"/><circle cx="2.5" cy="12" r="2" fill="#f4511e"/><circle cx="8" cy="6.5" r="2" fill="#f4511e"/><circle cx="13.5" cy="11.5" r="2.8" fill="#f4511e"/><circle cx="21.5" cy="3.5" r="2.8" fill="#f4511e"/></svg><div style="position:absolute;left:1120.80px;top:222.16px;font-size:19.3px;line-height:19.3px;color:#333;font-weight:400;white-space:pre;transform-origin:0 16.34px;transform:scaleX(0.8725);">COUNTRIES</div><div style="position:absolute;left:1120.80px;top:248.30px;font-size:15px;line-height:15px;color:#b3b3b3;font-weight:400;white-space:pre;transform-origin:0 12.70px;transform:scaleX(1.0282);">Last 14 days</div><svg style="position:absolute;left:1219px;top:249.3px;" width="14" height="14" viewBox="0 0 14 14"><circle cx="7" cy="7" r="6" fill="none" stroke="#d3d3d3" stroke-width="1.6"/><circle cx="7" cy="7" r="3" fill="#d9d9d9"/></svg><svg style="position:absolute;left:1764.5px;top:222.5px;" width="26" height="16" viewBox="0 0 26 16"><path d="M2.5 12 L8 6.5 L13.5 11 L21.5 3.5" stroke="#f4511e" stroke-width="2" fill="none"/><circle cx="2.5" cy="12" r="2" fill="#f4511e"/><circle cx="8" cy="6.5" r="2" fill="#f4511e"/><circle cx="13.5" cy="11.5" r="2.8" fill="#f4511e"/><circle cx="21.5" cy="3.5" r="2.8" fill="#f4511e"/></svg><div style="position:absolute;left:1800.80px;top:221.16px;font-size:19.3px;line-height:19.3px;color:#333;font-weight:400;white-space:pre;transform-origin:0 16.34px;transform:scaleX(0.8376);">USERS</div><div style="position:absolute;left:1800.80px;top:248.30px;font-size:15px;line-height:15px;color:#b3b3b3;font-weight:400;white-space:pre;transform-origin:0 12.70px;transform:scaleX(1.0274);">Last 14 days, daily</div><svg style="position:absolute;left:1939.6px;top:249.5px;" width="14" height="14" viewBox="0 0 14 14"><circle cx="7" cy="7" r="6" fill="none" stroke="#d3d3d3" stroke-width="1.6"/><circle cx="7" cy="7" r="3" fill="#d9d9d9"/></svg><svg style="position:absolute;left:1764.5px;top:524.5px;" width="26" height="16" viewBox="0 0 26 16"><path d="M2.5 12 L8 6.5 L13.5 11 L21.5 3.5" stroke="#f4511e" stroke-width="2" fill="none"/><circle cx="2.5" cy="12" r="2" fill="#f4511e"/><circle cx="8" cy="6.5" r="2" fill="#f4511e"/><circle cx="13.5" cy="11.5" r="2.8" fill="#f4511e"/><circle cx="21.5" cy="3.5" r="2.8" fill="#f4511e"/></svg><div style="position:absolute;left:1801.00px;top:523.96px;font-size:19.3px;line-height:19.3px;color:#333;font-weight:400;white-space:pre;transform-origin:0 16.34px;transform:scaleX(0.8693);">SESSIONS</div><div style="position:absolute;left:1801.00px;top:549.80px;font-size:15px;line-height:15px;color:#b3b3b3;font-weight:400;white-space:pre;transform-origin:0 12.70px;transform:scaleX(1.0250);">Last 14 days, daily</div><svg style="position:absolute;left:1939.6px;top:551px;" width="14" height="14" viewBox="0 0 14 14"><circle cx="7" cy="7" r="6" fill="none" stroke="#d3d3d3" stroke-width="1.6"/><circle cx="7" cy="7" r="3" fill="#d9d9d9"/></svg><svg style="position:absolute;left:1084.5px;top:827.5px;" width="26" height="16" viewBox="0 0 26 16"><path d="M2.5 12 L8 6.5 L13.5 11 L21.5 3.5" stroke="#f4511e" stroke-width="2" fill="none"/><circle cx="2.5" cy="12" r="2" fill="#f4511e"/><circle cx="8" cy="6.5" r="2" fill="#f4511e"/><circle cx="13.5" cy="11.5" r="2.8" fill="#f4511e"/><circle cx="21.5" cy="3.5" r="2.8" fill="#f4511e"/></svg><div style="position:absolute;left:1120.50px;top:826.56px;font-size:19.3px;line-height:19.3px;color:#333;font-weight:400;white-space:pre;transform-origin:0 16.34px;transform:scaleX(0.8916);">DEMOGRAPHICS</div><div style="position:absolute;left:1120.50px;top:853.60px;font-size:15px;line-height:15px;color:#b3b3b3;font-weight:400;white-space:pre;transform-origin:0 12.70px;transform:scaleX(1.0233);">Last 14 days, daily</div><svg style="position:absolute;left:1259.6px;top:854.6px;" width="14" height="14" viewBox="0 0 14 14"><circle cx="7" cy="7" r="6" fill="none" stroke="#d3d3d3" stroke-width="1.6"/><circle cx="7" cy="7" r="3" fill="#d9d9d9"/></svg><svg style="position:absolute;left:1537.5px;top:827.5px;" width="26" height="16" viewBox="0 0 26 16"><path d="M2.5 12 L8 6.5 L13.5 11 L21.5 3.5" stroke="#f4511e" stroke-width="2" fill="none"/><circle cx="2.5" cy="12" r="2" fill="#f4511e"/><circle cx="8" cy="6.5" r="2" fill="#f4511e"/><circle cx="13.5" cy="11.5" r="2.8" fill="#f4511e"/><circle cx="21.5" cy="3.5" r="2.8" fill="#f4511e"/></svg><div style="position:absolute;left:1574.10px;top:826.96px;font-size:19.3px;line-height:19.3px;color:#333;font-weight:400;white-space:pre;transform-origin:0 16.34px;transform:scaleX(0.8725);">DEVICES</div><div style="position:absolute;left:1574.10px;top:853.70px;font-size:15px;line-height:15px;color:#b3b3b3;font-weight:400;white-space:pre;transform-origin:0 12.70px;transform:scaleX(1.0212);">Last 14 days</div><svg style="position:absolute;left:1672.8px;top:854.2px;" width="14" height="14" viewBox="0 0 14 14"><circle cx="7" cy="7" r="6" fill="none" stroke="#d3d3d3" stroke-width="1.6"/><circle cx="7" cy="7" r="3" fill="#d9d9d9"/></svg><svg style="position:absolute;left:1991.5px;top:827.5px;" width="26" height="16" viewBox="0 0 26 16"><path d="M2.5 12 L8 6.5 L13.5 11 L21.5 3.5" stroke="#f4511e" stroke-width="2" fill="none"/><circle cx="2.5" cy="12" r="2" fill="#f4511e"/><circle cx="8" cy="6.5" r="2" fill="#f4511e"/><circle cx="13.5" cy="11.5" r="2.8" fill="#f4511e"/><circle cx="21.5" cy="3.5" r="2.8" fill="#f4511e"/></svg><div style="position:absolute;left:2027.50px;top:826.96px;font-size:19.3px;line-height:19.3px;color:#333;font-weight:400;white-space:pre;transform-origin:0 16.34px;transform:scaleX(0.8725);">SOCIAL NETWORKS</div><div style="position:absolute;left:2027.50px;top:853.70px;font-size:15px;line-height:15px;color:#b3b3b3;font-weight:400;white-space:pre;transform-origin:0 12.70px;transform:scaleX(1.0282);">Last 14 days</div><svg style="position:absolute;left:2126px;top:854.2px;" width="14" height="14" viewBox="0 0 14 14"><circle cx="7" cy="7" r="6" fill="none" stroke="#d3d3d3" stroke-width="1.6"/><circle cx="7" cy="7" r="3" fill="#d9d9d9"/></svg><div style="position:absolute;left:1091.00px;top:294.93px;font-size:16.5px;line-height:16.5px;color:#1a1a1a;font-weight:400;white-space:pre;transform-origin:0 13.97px;transform:scaleX(1.0973);">9,114</div><div style="position:absolute;left:1141.00px;top:294.93px;font-size:16.5px;line-height:16.5px;color:#333;font-weight:400;white-space:pre;transform-origin:0 13.97px;transform:scaleX(0.9970);">– All sessions</div><div style="position:absolute;left:1091.00px;top:329.73px;font-size:16.5px;line-height:16.5px;color:#333;font-weight:400;white-space:pre;transform-origin:0 13.97px;transform:scaleX(0.9586);">United States</div><div style="position:absolute;left:1243.30px;top:329.31px;font-size:17px;line-height:17px;color:#333;font-weight:400;white-space:pre;transform-origin:0 14.39px;transform:scaleX(1.0424);">1,896</div><div style="position:absolute;left:1091.00px;top:353.40px;width:197.00px;height:3.80px;background:#0b8fd5;border-radius:1px;"></div><div style="position:absolute;left:1091.00px;top:369.93px;font-size:16.5px;line-height:16.5px;color:#333;font-weight:400;white-space:pre;transform-origin:0 13.97px;transform:scaleX(0.9516);">Brazil</div><div style="position:absolute;left:1257.50px;top:369.51px;font-size:17px;line-height:17px;color:#333;font-weight:400;white-space:pre;transform-origin:0 14.39px;transform:scaleX(1.0599);">647</div><div style="position:absolute;left:1091.00px;top:393.60px;width:66.70px;height:3.80px;background:#7fc5e9;border-radius:1px;"></div><div style="position:absolute;left:1091.00px;top:410.13px;font-size:16.5px;line-height:16.5px;color:#333;font-weight:400;white-space:pre;transform-origin:0 13.97px;transform:scaleX(0.9693);">United Kingdom</div><div style="position:absolute;left:1257.50px;top:409.71px;font-size:17px;line-height:17px;color:#333;font-weight:400;white-space:pre;transform-origin:0 14.39px;transform:scaleX(1.0599);">575</div><div style="position:absolute;left:1091.00px;top:433.80px;width:60.20px;height:3.80px;background:#7fc5e9;border-radius:1px;"></div><div style="position:absolute;left:1091.00px;top:450.33px;font-size:16.5px;line-height:16.5px;color:#333;font-weight:400;white-space:pre;transform-origin:0 13.97px;transform:scaleX(0.9406);">Russia</div><div style="position:absolute;left:1257.50px;top:449.91px;font-size:17px;line-height:17px;color:#333;font-weight:400;white-space:pre;transform-origin:0 14.39px;transform:scaleX(1.0599);">558</div><div style="position:absolute;left:1091.00px;top:474.00px;width:57.30px;height:3.80px;background:#7fc5e9;border-radius:1px;"></div><div style="position:absolute;left:1091.00px;top:490.53px;font-size:16.5px;line-height:16.5px;color:#333;font-weight:400;white-space:pre;transform-origin:0 13.97px;transform:scaleX(0.9571);">Italy</div><div style="position:absolute;left:1257.00px;top:490.11px;font-size:17px;line-height:17px;color:#333;font-weight:400;white-space:pre;transform-origin:0 14.39px;transform:scaleX(1.0775);">350</div><div style="position:absolute;left:1091.00px;top:514.20px;width:36.00px;height:3.80px;background:#7fc5e9;border-radius:1px;"></div><div style="position:absolute;left:1091.00px;top:530.73px;font-size:16.5px;line-height:16.5px;color:#333;font-weight:400;white-space:pre;transform-origin:0 13.97px;transform:scaleX(0.9339);">France</div><div style="position:absolute;left:1256.80px;top:530.31px;font-size:17px;line-height:17px;color:#333;font-weight:400;white-space:pre;transform-origin:0 14.39px;transform:scaleX(1.0845);">321</div><div style="position:absolute;left:1091.00px;top:554.40px;width:33.20px;height:3.80px;background:#7fc5e9;border-radius:1px;"></div><div style="position:absolute;left:1091.00px;top:570.93px;font-size:16.5px;line-height:16.5px;color:#333;font-weight:400;white-space:pre;transform-origin:0 13.97px;transform:scaleX(0.9336);">Spain</div><div style="position:absolute;left:1256.80px;top:570.51px;font-size:17px;line-height:17px;color:#333;font-weight:400;white-space:pre;transform-origin:0 14.39px;transform:scaleX(1.0845);">289</div><div style="position:absolute;left:1091.00px;top:594.60px;width:29.00px;height:3.80px;background:#7fc5e9;border-radius:1px;"></div><div style="position:absolute;left:1091.00px;top:611.13px;font-size:16.5px;line-height:16.5px;color:#333;font-weight:400;white-space:pre;transform-origin:0 13.97px;transform:scaleX(0.9688);">Australia</div><div style="position:absolute;left:1256.80px;top:610.71px;font-size:17px;line-height:17px;color:#333;font-weight:400;white-space:pre;transform-origin:0 14.39px;transform:scaleX(1.0845);">287</div><div style="position:absolute;left:1091.00px;top:634.80px;width:29.00px;height:3.80px;background:#7fc5e9;border-radius:1px;"></div><div style="position:absolute;left:1091.00px;top:651.33px;font-size:16.5px;line-height:16.5px;color:#333;font-weight:400;white-space:pre;transform-origin:0 13.97px;transform:scaleX(0.9350);">Ukraine</div><div style="position:absolute;left:1256.80px;top:650.91px;font-size:17px;line-height:17px;color:#333;font-weight:400;white-space:pre;transform-origin:0 14.39px;transform:scaleX(1.0845);">281</div><div style="position:absolute;left:1091.00px;top:675.00px;width:29.00px;height:3.80px;background:#7fc5e9;border-radius:1px;"></div><div style="position:absolute;left:1091.00px;top:691.53px;font-size:16.5px;line-height:16.5px;color:#333;font-weight:400;white-space:pre;transform-origin:0 13.97px;transform:scaleX(0.9581);">India</div><div style="position:absolute;left:1256.80px;top:691.11px;font-size:17px;line-height:17px;color:#333;font-weight:400;white-space:pre;transform-origin:0 14.39px;transform:scaleX(1.0845);">273</div><div style="position:absolute;left:1091.00px;top:715.20px;width:27.80px;height:3.80px;background:#7fc5e9;border-radius:1px;"></div><div style="position:absolute;left:1091.00px;top:731.73px;font-size:16.5px;line-height:16.5px;color:#333;font-weight:400;white-space:pre;transform-origin:0 13.97px;transform:scaleX(0.9343);">Canada</div><div style="position:absolute;left:1256.80px;top:731.31px;font-size:17px;line-height:17px;color:#333;font-weight:400;white-space:pre;transform-origin:0 14.39px;transform:scaleX(1.0845);">242</div><div style="position:absolute;left:1091.00px;top:755.40px;width:25.00px;height:3.80px;background:#7fc5e9;border-radius:1px;"></div><svg style="position:absolute;left:1302px;top:288px;" width="28" height="120" viewBox="0 0 28 120"><circle cx="14" cy="14" r="11.5" fill="#fff" stroke="#b9b9b9" stroke-width="1.3"/><path d="M14 8.5 V19.5 M8.5 14 H19.5" stroke="#a9a9a9" stroke-width="1.3"/><circle cx="14" cy="52.8" r="11.5" fill="#fff" stroke="#b9b9b9" stroke-width="1.3"/><path d="M8.5 52.8 H19.5" stroke="#a9a9a9" stroke-width="1.3"/><circle cx="14" cy="105" r="11.5" fill="#fff" stroke="#e6e6e6" stroke-width="1.3"/><path d="M9.5 106 L14 101.5 L18.5 106 V110 H9.5 Z" fill="#e3e3e3"/></svg><svg style="position:absolute;left:0;top:0" width="2123" height="1081"><polygon points="1334.3,477.3 1349.2,476.6 1364.8,481.1 1382.9,484.4 1393.3,485.7 1398.4,477.9 1407.5,479.2 1414,485.7 1416.6,494.7 1424.4,485.7 1426.3,492.2 1423.1,498.6 1416.6,499.9 1423.1,506.4 1433.4,518.1 1436,525.8 1429.5,527.1 1419.2,532.3 1412.7,535 1397.2,529.7 1355.7,528.4 1345.3,518.1 1342.7,507.7 1334.3,501.9" fill="#b2c6d2" stroke="#fff" stroke-width="0.6" stroke-linejoin="round"/><polygon points="1389.4,502.5 1397.2,493.4 1403.6,494.7 1408.8,501.2 1410.1,509 1408.8,516.8 1406.2,521.9 1403.6,515.5 1398.4,511.6 1390.7,507.7" fill="#fff" stroke="#fff" stroke-width="0.6" stroke-linejoin="round"/><polygon points="1393.3,414.4 1403.6,405.4 1424.4,404.1 1427.6,409.2 1421.8,419.6 1414,428.7 1410.1,436.5 1407.5,448.1 1398.4,448.1 1395.9,440.3 1399.7,431.3 1394.6,424.8" fill="#b2c6d2" stroke="#fff" stroke-width="0.6" stroke-linejoin="round"/><polygon points="1386.8,424.8 1393.3,420.9 1398.4,432.6 1395.9,440.3 1390.7,437.7 1388.1,432.6" fill="#b2c6d2" stroke="#fff" stroke-width="0.6" stroke-linejoin="round"/><polygon points="1395.9,463.7 1406.2,463.7 1414,471.4 1420.5,479.2 1425.6,488.3 1423.1,497.3 1416.6,498.6 1412.7,488.3 1403.6,479.2 1398.4,474" fill="#b2c6d2" stroke="#fff" stroke-width="0.6" stroke-linejoin="round"/><polygon points="1353.1,461.1 1363.5,462.4 1360.9,472.7 1354.4,471.4" fill="#b2c6d2" stroke="#fff" stroke-width="0.6" stroke-linejoin="round"/><polygon points="1362.2,467.5 1380.3,465 1382.9,479.2 1370,483.1 1363.5,475.3" fill="#b2c6d2" stroke="#fff" stroke-width="0.6" stroke-linejoin="round"/><polygon points="1380.3,449.4 1385.5,449.4 1390.7,457.2 1389.4,467.5 1382.9,462.4" fill="#b2c6d2" stroke="#fff" stroke-width="0.6" stroke-linejoin="round"/><polygon points="1390.7,452 1404.9,453.3 1406.2,458.5 1395.9,457.2" fill="#b2c6d2" stroke="#fff" stroke-width="0.6" stroke-linejoin="round"/><polygon points="1357,446.8 1363.5,445.5 1359.6,452" fill="#b2c6d2" stroke="#fff" stroke-width="0.6" stroke-linejoin="round"/><polygon points="1363.5,450.7 1372.5,449.4 1375.1,455.9 1367.4,457.2" fill="#b2c6d2" stroke="#fff" stroke-width="0.6" stroke-linejoin="round"/><polygon points="1388.1,462.4 1393.3,462.4 1393.3,472.7 1389.4,472.7" fill="#b2c6d2" stroke="#fff" stroke-width="0.6" stroke-linejoin="round"/><polygon points="1386.8,471.4 1393.3,472.7 1398.4,484.4 1390.7,485.7" fill="#b2c6d2" stroke="#fff" stroke-width="0.6" stroke-linejoin="round"/><polygon points="1305.2,480.5 1316.8,472.7 1334.3,477.3 1334.3,501.9 1342.7,507.7 1345.3,518 1340.2,509 1325.9,502.5 1319.4,506.4 1307.8,516.8 1313,509 1305.8,503.8 1305.2,497.3 1303.9,490.9 1307.8,485.7" fill="#33a7de" stroke="#fff" stroke-width="0.6" stroke-linejoin="round"/><polygon points="1416.6,440.3 1424.4,414.4 1446.4,411.8 1447.7,402.8 1461.9,400.2 1473.6,406.7 1476.2,413.1 1483.9,417 1478.8,427.4 1476.2,449.4 1474.9,472.7 1468.4,483.1 1455.4,493.4 1449,502.5 1443.8,502.5 1437.3,488.3 1434.7,462.4 1425.6,452 1419.2,446.8" fill="#e6e8ea" stroke="#fff" stroke-width="0.6" stroke-linejoin="round"/><polygon points="1472.3,488.3 1482.6,488.3 1481.3,494.7 1476.2,496" fill="#e6e8ea" stroke="#fff" stroke-width="0.6" stroke-linejoin="round"/><polygon points="1354.8,528.1 1388.8,527.4 1394.7,530.4 1400.7,528.9 1406.6,533.3 1418.4,531.1 1422.9,525.9 1425.8,528.9 1418.4,537.8 1414,543.7 1409.5,549.6 1403.6,554 1405.8,560 1403.6,560 1399.2,555.5 1388.8,555.5 1382.9,558.5 1371.1,552.6 1362.2,551.1 1357.7,546.6 1354.8,539.2" fill="#33a7de" stroke="#fff" stroke-width="0.6" stroke-linejoin="round"/><polygon points="1362.2,551.1 1371.1,552.6 1382.9,558.5 1388.8,564.4 1391.8,568.9 1396.2,567.4 1397.7,571.8 1393.3,574.8 1385.9,570.3 1378.5,565.9 1372.5,558.5 1365.1,555.5" fill="#b2c6d2" stroke="#fff" stroke-width="0.6" stroke-linejoin="round"/><polygon points="1393.3,574.8 1400.7,576.3 1406.6,582.2 1409.5,580.7 1408.1,585.1 1402.1,582.2 1396.2,577.7" fill="#c8cdd2" stroke="#fff" stroke-width="0.6" stroke-linejoin="round"/><polygon points="1398,566 1410,565 1414,568 1402,569" fill="#c8cdd2" stroke="#fff" stroke-width="0.6" stroke-linejoin="round"/><polygon points="1409.5,582.2 1418.4,579.2 1428.8,582.2 1436.2,589.6 1448,594 1458.4,600 1455.4,611.8 1449.5,620.7 1440.6,626.6 1436.2,632.5 1430.3,637 1427.3,645.8 1421.4,656.2 1418.4,662.1 1422.9,669.5 1417,669.5 1412.5,660.6 1414,648.8 1417,632.5 1415.5,617.7 1409.5,608.8 1405.1,597" fill="#c8cdd2" stroke="#fff" stroke-width="0.6" stroke-linejoin="round"/><polygon points="1415.5,600 1421.4,592.5 1430.3,589.6 1439.2,589.6 1448,594 1458.4,600 1455.4,611.8 1449.5,620.7 1440.6,626.6 1437.7,631 1433.2,623.6 1430.3,614.7 1421.4,605.9" fill="#8ec3dc" stroke="#fff" stroke-width="0.6" stroke-linejoin="round"/><polygon points="1506.3,500.3 1515.3,487.3 1525.7,475.7 1533.4,473.1 1534.7,478.3 1529.6,484.7 1527,495.1 1521.8,502.9 1519.2,510.6 1514,514.5 1510.1,508" fill="#c8cdd2" stroke="#fff" stroke-width="0.6" stroke-linejoin="round"/><polygon points="1525.7,497.7 1530.9,487.3 1534.7,487.3 1536,502.9 1530.9,505.5 1525.7,502.9" fill="#c8cdd2" stroke="#fff" stroke-width="0.6" stroke-linejoin="round"/><polygon points="1507.5,522.3 1512.7,513.2 1527,510.6 1534.7,513.2 1538.6,523.6 1545.1,527.5 1542.5,533.9 1534.7,536.5 1524.4,536.5 1514,533.9 1508.8,530" fill="#c8cdd2" stroke="#fff" stroke-width="0.6" stroke-linejoin="round"/><polygon points="1494.6,509.3 1499.8,518.4 1501.1,522.3 1495.9,523.6 1494.6,518.4" fill="#7db8da" stroke="#fff" stroke-width="0.6" stroke-linejoin="round"/><polygon points="1489.4,517.1 1492.7,515.8 1492,521 1489.4,521" fill="#c8cdd2" stroke="#fff" stroke-width="0.6" stroke-linejoin="round"/><polygon points="1498.5,526.2 1507.5,522.3 1511.4,531.3 1507.5,536.5 1501.1,535.2 1498.5,531.3" fill="#aac8d8" stroke="#fff" stroke-width="0.6" stroke-linejoin="round"/><polygon points="1489.4,536.5 1501.1,535.2 1499.8,544.3 1490.7,545.6" fill="#aac8d8" stroke="#fff" stroke-width="0.6" stroke-linejoin="round"/><polygon points="1508.8,530 1514,533.9 1519.2,541.7 1515.3,541.7 1508.8,533.9" fill="#aac8d8" stroke="#fff" stroke-width="0.6" stroke-linejoin="round"/><polygon points="1528.3,522.3 1539.9,521 1546.4,527.5 1542.5,532.6 1532.1,531.3" fill="#aac8d8" stroke="#fff" stroke-width="0.6" stroke-linejoin="round"/><polygon points="1532.1,541.7 1542.5,539.1 1551.6,540.4 1552.9,545.6 1542.5,545.6 1533.4,545.6" fill="#c8cdd2" stroke="#fff" stroke-width="0.6" stroke-linejoin="round"/><polygon points="1511,531 1524,536.5 1534.7,536.5 1536,540 1532,542.5 1524,545 1517,541" fill="#c8cdd2" stroke="#fff" stroke-width="0.6" stroke-linejoin="round"/><polygon points="1527,510.6 1534.7,504.2 1536,518.4 1542.5,524.9 1538.6,523.6 1534.7,513.2" fill="#c8cdd2" stroke="#fff" stroke-width="0.6" stroke-linejoin="round"/><polygon points="1546.4,528 1552.9,536.5 1554.2,543 1551.6,540.4 1545,536" fill="#c8cdd2" stroke="#fff" stroke-width="0.6" stroke-linejoin="round"/><polygon points="1501.1,535.2 1507.5,536.5 1511,531 1508.8,530 1507.5,522.3" fill="#c8cdd2" stroke="#fff" stroke-width="0.6" stroke-linejoin="round"/><polygon points="1534.7,504.2 1536,478.3 1547.7,487.3 1552.9,482.1 1573.6,478.3 1580,466.6 1586.5,466.6 1593,464 1602.1,455 1620.7,444.6 1632.4,452.4 1628.5,460.2 1645.3,464 1654.4,471.8 1664.8,467.9 1684.2,474.4 1699.7,477 1714,484.8 1721.8,488.7 1717.9,492.5 1708.8,496.4 1690.7,502.9 1680.3,502.9 1659.6,515.9 1664.8,518.4 1662.2,530.1 1655.7,535.3 1642.7,518.4 1615.5,522.3 1604.7,526.2 1586.5,518.4 1580,514.5 1558,522.3 1552.9,536.5 1546.4,533.9 1542.5,524.9 1536,518.4" fill="#a3c5d7" stroke="#fff" stroke-width="0.6" stroke-linejoin="round"/><polygon points="1561.9,469.2 1568.4,457.5 1579.4,449.1 1577.5,452.4 1568.4,462.7 1564.5,473.1" fill="#a3c5d7" stroke="#fff" stroke-width="0.6" stroke-linejoin="round"/><polygon points="1608.5,422.6 1613.7,422.6 1616.3,435.5 1611.1,436.8" fill="#a3c5d7" stroke="#fff" stroke-width="0.6" stroke-linejoin="round"/><polygon points="1617.6,438.1 1622.8,438.1 1620.2,442" fill="#a3c5d7" stroke="#fff" stroke-width="0.6" stroke-linejoin="round"/><polygon points="1660.9,453.7 1668.7,455 1666.1,457.6 1662.2,457.6" fill="#a3c5d7" stroke="#fff" stroke-width="0.6" stroke-linejoin="round"/><polygon points="1682.9,513.3 1692,499 1689.4,510.7 1684.2,522.3" fill="#a3c5d7" stroke="#fff" stroke-width="0.6" stroke-linejoin="round"/><polygon points="1514,431.7 1524.4,426.5 1530.9,427.8 1527,435.5 1521.8,445.9 1517.9,447.2" fill="#e6e8ea" stroke="#fff" stroke-width="0.6" stroke-linejoin="round"/><polygon points="1558,522.3 1580,514.5 1586.5,518.4 1604.7,526.2 1615.5,522.3 1642.7,518.4 1655.7,535.3 1650,545 1640,561.1 1628,568.8 1616.3,568.8 1607.2,559.8 1599.5,558.5 1589.1,549.4 1582.6,544.3 1568.4,541.7 1554.2,536.5" fill="#c8cdd2" stroke="#fff" stroke-width="0.6" stroke-linejoin="round"/><polygon points="1660.9,552.1 1667.4,536.6 1668.7,521 1666.1,534 1662.2,545.6 1653.1,553.4" fill="#c8cdd2" stroke="#fff" stroke-width="0.6" stroke-linejoin="round"/><polygon points="1480.4,568.8 1489.4,553.3 1501.1,548.1 1512.7,550.7 1527,553.3 1539.9,554.6 1542.5,559.8 1550.3,575.3 1560.6,580.5 1552.9,589.6 1546.4,597.3 1547.7,609 1539.9,620.6 1534.7,631 1524.4,634.9 1520.5,628.4 1515.3,612.9 1512.7,598.6 1508.8,588.3 1492,585.7 1481.7,579.2" fill="#e6e8ea" stroke="#fff" stroke-width="0.6" stroke-linejoin="round"/><polygon points="1489.4,553.3 1501.1,548.1 1512.7,550.7 1527,553.3 1539.9,554.6 1542.5,563.7 1528.3,565 1519.2,565 1505,568.8 1490.7,559.8" fill="#c8cdd2" stroke="#fff" stroke-width="0.6" stroke-linejoin="round"/><polygon points="1480.4,574 1485.5,581.8 1502.4,584.4 1508.8,577.9 1516.6,579.2 1519.2,593.4 1512.7,594.7 1508.8,588.3 1492,585.7" fill="#c8cdd2" stroke="#fff" stroke-width="0.6" stroke-linejoin="round"/><polygon points="1537.3,589.6 1546.4,588.3 1547.7,609 1539.9,620.6 1534.7,631 1524.4,634.9 1521.8,629.7 1524.4,618 1527,607.7 1534.7,602.5 1536,594.7" fill="#c8cdd2" stroke="#fff" stroke-width="0.6" stroke-linejoin="round"/><polygon points="1552.9,612.9 1558,607.7 1555.4,620.6 1551.6,621.9" fill="#c8cdd2" stroke="#fff" stroke-width="0.6" stroke-linejoin="round"/><polygon points="1542.5,554.6 1555.4,555.9 1568.4,566.3 1563.2,572.7 1551.6,576.6 1547.7,568.8" fill="#c8cdd2" stroke="#fff" stroke-width="0.6" stroke-linejoin="round"/><polygon points="1554.2,543 1573.6,541.7 1582.6,546.8 1576.2,557.2 1568.4,561.1 1560.6,549.4" fill="#c8cdd2" stroke="#fff" stroke-width="0.6" stroke-linejoin="round"/><polygon points="1582.6,550.7 1590.4,548.1 1602.1,562.4 1596.9,568.8 1591.7,581.8 1585.2,568.8 1580,561.1" fill="#aac8d8" stroke="#fff" stroke-width="0.6" stroke-linejoin="round"/><polygon points="1607.2,559.8 1616.3,568.8 1625.4,568.8 1628,579.2 1620.2,581.8 1615,575.3" fill="#c8cdd2" stroke="#fff" stroke-width="0.6" stroke-linejoin="round"/><polygon points="1612.4,587 1617.6,588.3 1625.4,598.6 1622.8,599.9" fill="#c8cdd2" stroke="#fff" stroke-width="0.6" stroke-linejoin="round"/><polygon points="1624.1,599.9 1635.7,601.2 1634.4,602.5" fill="#c8cdd2" stroke="#fff" stroke-width="0.6" stroke-linejoin="round"/><polygon points="1629.2,588.3 1637,585.7 1640,592.1 1633.1,596 1629.2,594.7" fill="#c8cdd2" stroke="#fff" stroke-width="0.6" stroke-linejoin="round"/><polygon points="1654.4,593.1 1664.8,595.7 1675.1,602.2 1664.8,602.2 1657,597" fill="#c8cdd2" stroke="#fff" stroke-width="0.6" stroke-linejoin="round"/><polygon points="1641.5,563.3 1644,564 1646.6,582.7 1643,580" fill="#c8cdd2" stroke="#fff" stroke-width="0.6" stroke-linejoin="round"/><polygon points="1633.7,620.3 1644,613.8 1654.4,607.4 1659.6,607.4 1663.5,612.5 1667.4,606.1 1672.5,615.1 1679,622.9 1679,630.7 1673.8,639.7 1666.1,641 1659.6,633.3 1651.8,630.7 1636.3,635.9 1633.7,628.1" fill="#b3cad6" stroke="#fff" stroke-width="0.6" stroke-linejoin="round"/><polygon points="1670,646.2 1673.8,646.2 1671.9,648.8" fill="#b3cad6" stroke="#fff" stroke-width="0.6" stroke-linejoin="round"/><polygon points="1695.9,652.7 1703.6,643.6 1708.8,639.7 1704.9,647.5 1698.4,654" fill="#c8cdd2" stroke="#fff" stroke-width="0.6" stroke-linejoin="round"/></svg><div style="position:absolute;left:1836.70px;top:319.68px;font-size:80px;line-height:80px;color:#0b96d9;font-weight:400;white-space:pre;transform-origin:0 67.72px;transform:scaleX(0.9505);">5,385</div><div style="position:absolute;left:1833.60px;top:621.18px;font-size:80px;line-height:80px;color:#0b96d9;font-weight:400;white-space:pre;transform-origin:0 67.72px;transform:scaleX(0.9610);">9,136</div><svg style="position:absolute;left:1833px;top:717px;" width="18" height="18" viewBox="0 0 18 18"><path d="M0.5 17 L8.8 0.8 L17 17 Z" fill="#19b47a"/></svg><div style="position:absolute;left:1855.80px;top:703.10px;font-size:36.5px;line-height:36.5px;color:#19b47a;font-weight:700;white-space:pre;transform-origin:0 30.90px;transform:scaleX(0.9721);">501</div><div style="position:absolute;left:1930.60px;top:702.68px;font-size:37px;line-height:37px;color:#3d5066;font-weight:400;white-space:pre;transform-origin:0 31.32px;transform:scaleX(1.0399);">/ day</div><div style="position:absolute;left:1090.70px;top:1027.90px;width:25.40px;height:17.10px;background:#0a96d8;"></div><div style="position:absolute;left:1121.60px;top:1029.50px;width:25.40px;height:15.50px;background:#ff7300;"></div><div style="position:absolute;top:1066.50px;font-size:13px;line-height:13px;color:#666;font-weight:400;white-space:nowrap;left:368.90px;width:1500px;text-align:center;">18-24</div><div style="position:absolute;left:1159.20px;top:943.50px;width:25.40px;height:101.50px;background:#0a96d8;"></div><div style="position:absolute;left:1190.10px;top:972.80px;width:25.40px;height:72.20px;background:#ff7300;"></div><div style="position:absolute;top:1066.50px;font-size:13px;line-height:13px;color:#666;font-weight:400;white-space:nowrap;left:437.40px;width:1500px;text-align:center;">25-34</div><div style="position:absolute;left:1227.70px;top:972.80px;width:25.40px;height:72.20px;background:#0a96d8;"></div><div style="position:absolute;left:1258.60px;top:1015.70px;width:25.40px;height:29.30px;background:#ff7300;"></div><div style="position:absolute;top:1066.50px;font-size:13px;line-height:13px;color:#666;font-weight:400;white-space:nowrap;left:505.90px;width:1500px;text-align:center;">35-44</div><div style="position:absolute;left:1296.20px;top:1020.10px;width:25.40px;height:24.90px;background:#0a96d8;"></div><div style="position:absolute;left:1327.10px;top:1034.70px;width:25.40px;height:10.30px;background:#ff7300;"></div><div style="position:absolute;top:1066.50px;font-size:13px;line-height:13px;color:#666;font-weight:400;white-space:nowrap;left:574.40px;width:1500px;text-align:center;">45-54</div><div style="position:absolute;left:1364.70px;top:1037.30px;width:25.40px;height:7.70px;background:#0a96d8;"></div><div style="position:absolute;left:1395.60px;top:1039.90px;width:25.40px;height:5.10px;background:#ff7300;"></div><div style="position:absolute;top:1066.50px;font-size:13px;line-height:13px;color:#666;font-weight:400;white-space:nowrap;left:642.90px;width:1500px;text-align:center;">55-64</div><div style="position:absolute;left:1433.20px;top:1041.40px;width:25.40px;height:3.60px;background:#0a96d8;"></div><div style="position:absolute;left:1464.10px;top:1042.50px;width:25.40px;height:2.50px;background:#ff7300;"></div><div style="position:absolute;top:1066.50px;font-size:13px;line-height:13px;color:#666;font-weight:400;white-space:nowrap;left:711.40px;width:1500px;text-align:center;">65+</div><svg style="position:absolute;left:0;top:0" width="2123" height="1081"><path d="M1614.50 919.95 A64.85 64.85 0 1 1 1549.78 980.73" stroke="#0a96d8" stroke-width="14.7" fill="none"/><path d="M1549.78 980.73 A64.85 64.85 0 0 1 1602.35 921.10" stroke="#ff7300" stroke-width="14.7" fill="none"/><path d="M1602.35 921.10 A64.85 64.85 0 0 1 1614.50 919.95" stroke="#e20b17" stroke-width="14.7" fill="none"/><path d="M2068.80 919.95 A64.85 64.85 0 1 1 2009.56 958.42" stroke="#0a96d8" stroke-width="14.7" fill="none"/><path d="M2009.56 958.42 A64.85 64.85 0 0 1 2045.56 924.26" stroke="#ff7300" stroke-width="14.7" fill="none"/><path d="M2045.56 924.26 A64.85 64.85 0 0 1 2062.02 920.31" stroke="#e20b17" stroke-width="14.7" fill="none"/><path d="M2062.02 920.31 A64.85 64.85 0 0 1 2064.28 920.11" stroke="#1fb57a" stroke-width="14.7" fill="none"/><path d="M2064.28 920.11 A64.85 64.85 0 0 1 2068.80 919.95" stroke="#0a96d8" stroke-width="14.7" fill="none"/></svg><div style="position:absolute;left:1598.00px;top:949.61px;font-size:17px;line-height:17px;color:#555;font-weight:400;white-space:pre;transform-origin:0 14.39px;transform:scaleX(1.0810);">total</div><div style="position:absolute;left:1574.00px;top:972.52px;font-size:34px;line-height:34px;color:#3a4a5c;font-weight:700;white-space:pre;transform-origin:0 28.78px;transform:scaleX(0.9788);">5,388</div><div style="position:absolute;left:2051.00px;top:949.61px;font-size:17px;line-height:17px;color:#555;font-weight:400;white-space:pre;transform-origin:0 14.39px;transform:scaleX(1.0810);">total</div><div style="position:absolute;left:2036.00px;top:971.74px;font-size:40px;line-height:40px;color:#3a4a5c;font-weight:700;white-space:pre;transform-origin:0 33.86px;transform:scaleX(0.9895);">555</div><svg style="position:absolute;left:1730.5px;top:954.3px;" width="9" height="9" viewBox="0 0 9 9"><circle cx="4.5" cy="4.5" r="4" fill="#0a96d8"/></svg><div style="position:absolute;left:1749.70px;top:951.77px;font-size:13.5px;line-height:13.5px;color:#444;font-weight:400;white-space:pre;transform-origin:0 11.43px;transform:scaleX(1.0063);">desktop</div><div style="position:absolute;left:1842.00px;top:952.20px;font-size:13px;line-height:13px;color:#444;font-weight:700;white-space:pre;transform-origin:0 11.00px;transform:scaleX(1.0301);">4,089  / 76%</div><svg style="position:absolute;left:1730.5px;top:978.55px;" width="9" height="9" viewBox="0 0 9 9"><circle cx="4.5" cy="4.5" r="4" fill="#ff7300"/></svg><div style="position:absolute;left:1749.70px;top:976.02px;font-size:13.5px;line-height:13.5px;color:#444;font-weight:400;white-space:pre;transform-origin:0 11.43px;transform:scaleX(1.0151);">mobile</div><div style="position:absolute;left:1842.60px;top:976.45px;font-size:13px;line-height:13px;color:#444;font-weight:700;white-space:pre;transform-origin:0 11.00px;transform:scaleX(1.0219);">1,149  / 21%</div><svg style="position:absolute;left:1730.5px;top:1002.8px;" width="9" height="9" viewBox="0 0 9 9"><circle cx="4.5" cy="4.5" r="4" fill="#e20b17"/></svg><div style="position:absolute;left:1749.70px;top:1000.27px;font-size:13.5px;line-height:13.5px;color:#444;font-weight:400;white-space:pre;transform-origin:0 11.43px;transform:scaleX(1.0061);">tablet</div><div style="position:absolute;left:1853.60px;top:1000.70px;font-size:13px;line-height:13px;color:#444;font-weight:700;white-space:pre;transform-origin:0 11.00px;transform:scaleX(1.0225);">150  /   3%</div><div style="position:absolute;left:962.00px;top:1079.00px;width:1161.00px;height:1.00px;background:#e0e0e2;"></div><div style="position:absolute;left:962.00px;top:1080.00px;width:1161.00px;height:1.00px;background:#f6f6f8;"></div></div><div style="position:absolute;left:0.00px;top:0.00px;width:1161.00px;height:42.00px;background:#dee1e6;"></div><div style="position:absolute;left:13.00px;top:15.50px;width:12.00px;height:12.00px;background:#fe5f57;border-radius:50%;"></div><div style="position:absolute;left:33.00px;top:15.50px;width:12.00px;height:12.00px;background:#febc2e;border-radius:50%;"></div><div style="position:absolute;left:53.00px;top:15.50px;width:12.00px;height:12.00px;background:#28c840;border-radius:50%;"></div><svg style="position:absolute;left:70px;top:8px;" width="180" height="34" viewBox="0 0 180 34"><path d="M0 34 Q10 34 10 24 L10 8 Q10 0 18 0 L161 0 Q169 0 169 8 L169 24 Q169 34 179 34 Z" fill="#ffffff"/></svg><svg style="position:absolute;left:89px;top:16px;" width="17" height="17" viewBox="0 0 17 17"><path d="M4.90 5.48 A4.7 4.7 0 0 1 12.10 5.48" stroke="#ea4335" stroke-width="2.6" fill="none"/><path d="M4.90 11.52 A4.7 4.7 0 0 1 4.90 5.48" stroke="#fbbc05" stroke-width="2.6" fill="none"/><path d="M12.10 11.52 A4.7 4.7 0 0 1 4.90 11.52" stroke="#34a853" stroke-width="2.6" fill="none"/><path d="M13.20 8.50 A4.7 4.7 0 0 1 12.10 11.52" stroke="#4285f4" stroke-width="2.6" fill="none"/><rect x="8.30" y="7.30" width="6.00" height="2.4" fill="#4285f4"/></svg><div style="position:absolute;top:18.84px;font-size:12px;line-height:12px;color:#3c4043;font-weight:400;white-space:nowrap;left:114.50px;">Google</div><svg style="position:absolute;left:216px;top:19px;" width="12" height="12" viewBox="0 0 12 12"><path d="M2.2 2.2 L9.8 9.8 M9.8 2.2 L2.2 9.8" stroke="#3c4043" stroke-width="1.3"/></svg><svg style="position:absolute;left:255px;top:17px;" width="16" height="16" viewBox="0 0 16 16"><path d="M8 1.5 V14.5 M1.5 8 H14.5" stroke="#3c4043" stroke-width="1.9"/></svg><div style="position:absolute;left:0.00px;top:42.00px;width:1161.00px;height:37.00px;background:#ffffff;"></div><div style="position:absolute;left:0.00px;top:79.00px;width:1161.00px;height:1.00px;background:#dadce0;"></div><svg style="position:absolute;left:13px;top:53px;" width="16" height="16" viewBox="0 0 16 16"><path d="M14 8 H2.5 M8 2.3 L2.3 8 L8 13.7" stroke="#5f6368" stroke-width="1.6" fill="none"/></svg><svg style="position:absolute;left:44px;top:53px;" width="16" height="16" viewBox="0 0 16 16"><path d="M2 8 H13.5 M8 2.3 L13.7 8 L8 13.7" stroke="#b9babc" stroke-width="1.6" fill="none"/></svg><svg style="position:absolute;left:75px;top:53px;" width="16" height="16" viewBox="0 0 16 16"><path d="M13.2 6.2 A5.6 5.6 0 1 0 13.6 9.5" stroke="#5f6368" stroke-width="1.6" fill="none"/><path d="M14.2 2.2 V7.4 H9" fill="#5f6368"/></svg><svg style="position:absolute;left:106px;top:53px;" width="16" height="16" viewBox="0 0 16 16"><path d="M8 2.2 L2.2 8 H3.8 V14 H12.2 V8 H13.8 Z" stroke="#5f6368" stroke-width="1.5" fill="none" stroke-linejoin="miter"/></svg><div style="position:absolute;left:135.00px;top:47.00px;width:1046.00px;height:27.50px;background:#f1f3f4;border-radius:14px;"></div><svg style="position:absolute;left:147px;top:54px;" width="11" height="13" viewBox="0 0 11 13"><path d="M2.8 6 V4.3 A2.7 2.7 0 0 1 8.2 4.3 V6" stroke="#5f6368" stroke-width="1.4" fill="none"/><rect x="1.2" y="5.6" width="8.6" height="6.6" rx="0.8" fill="#5f6368"/></svg><div style="position:absolute;top:54.05px;font-size:14px;line-height:14px;color:#202124;font-weight:400;white-space:nowrap;letter-spacing:0.35px;left:168.50px;">google.com<span style="color:#6f7378">/search</span></div></div><div style="position:absolute;left:961.50px;top:80.00px;width:1.20px;height:1000.00px;background:#ffffff;"></div></div></body></html>
